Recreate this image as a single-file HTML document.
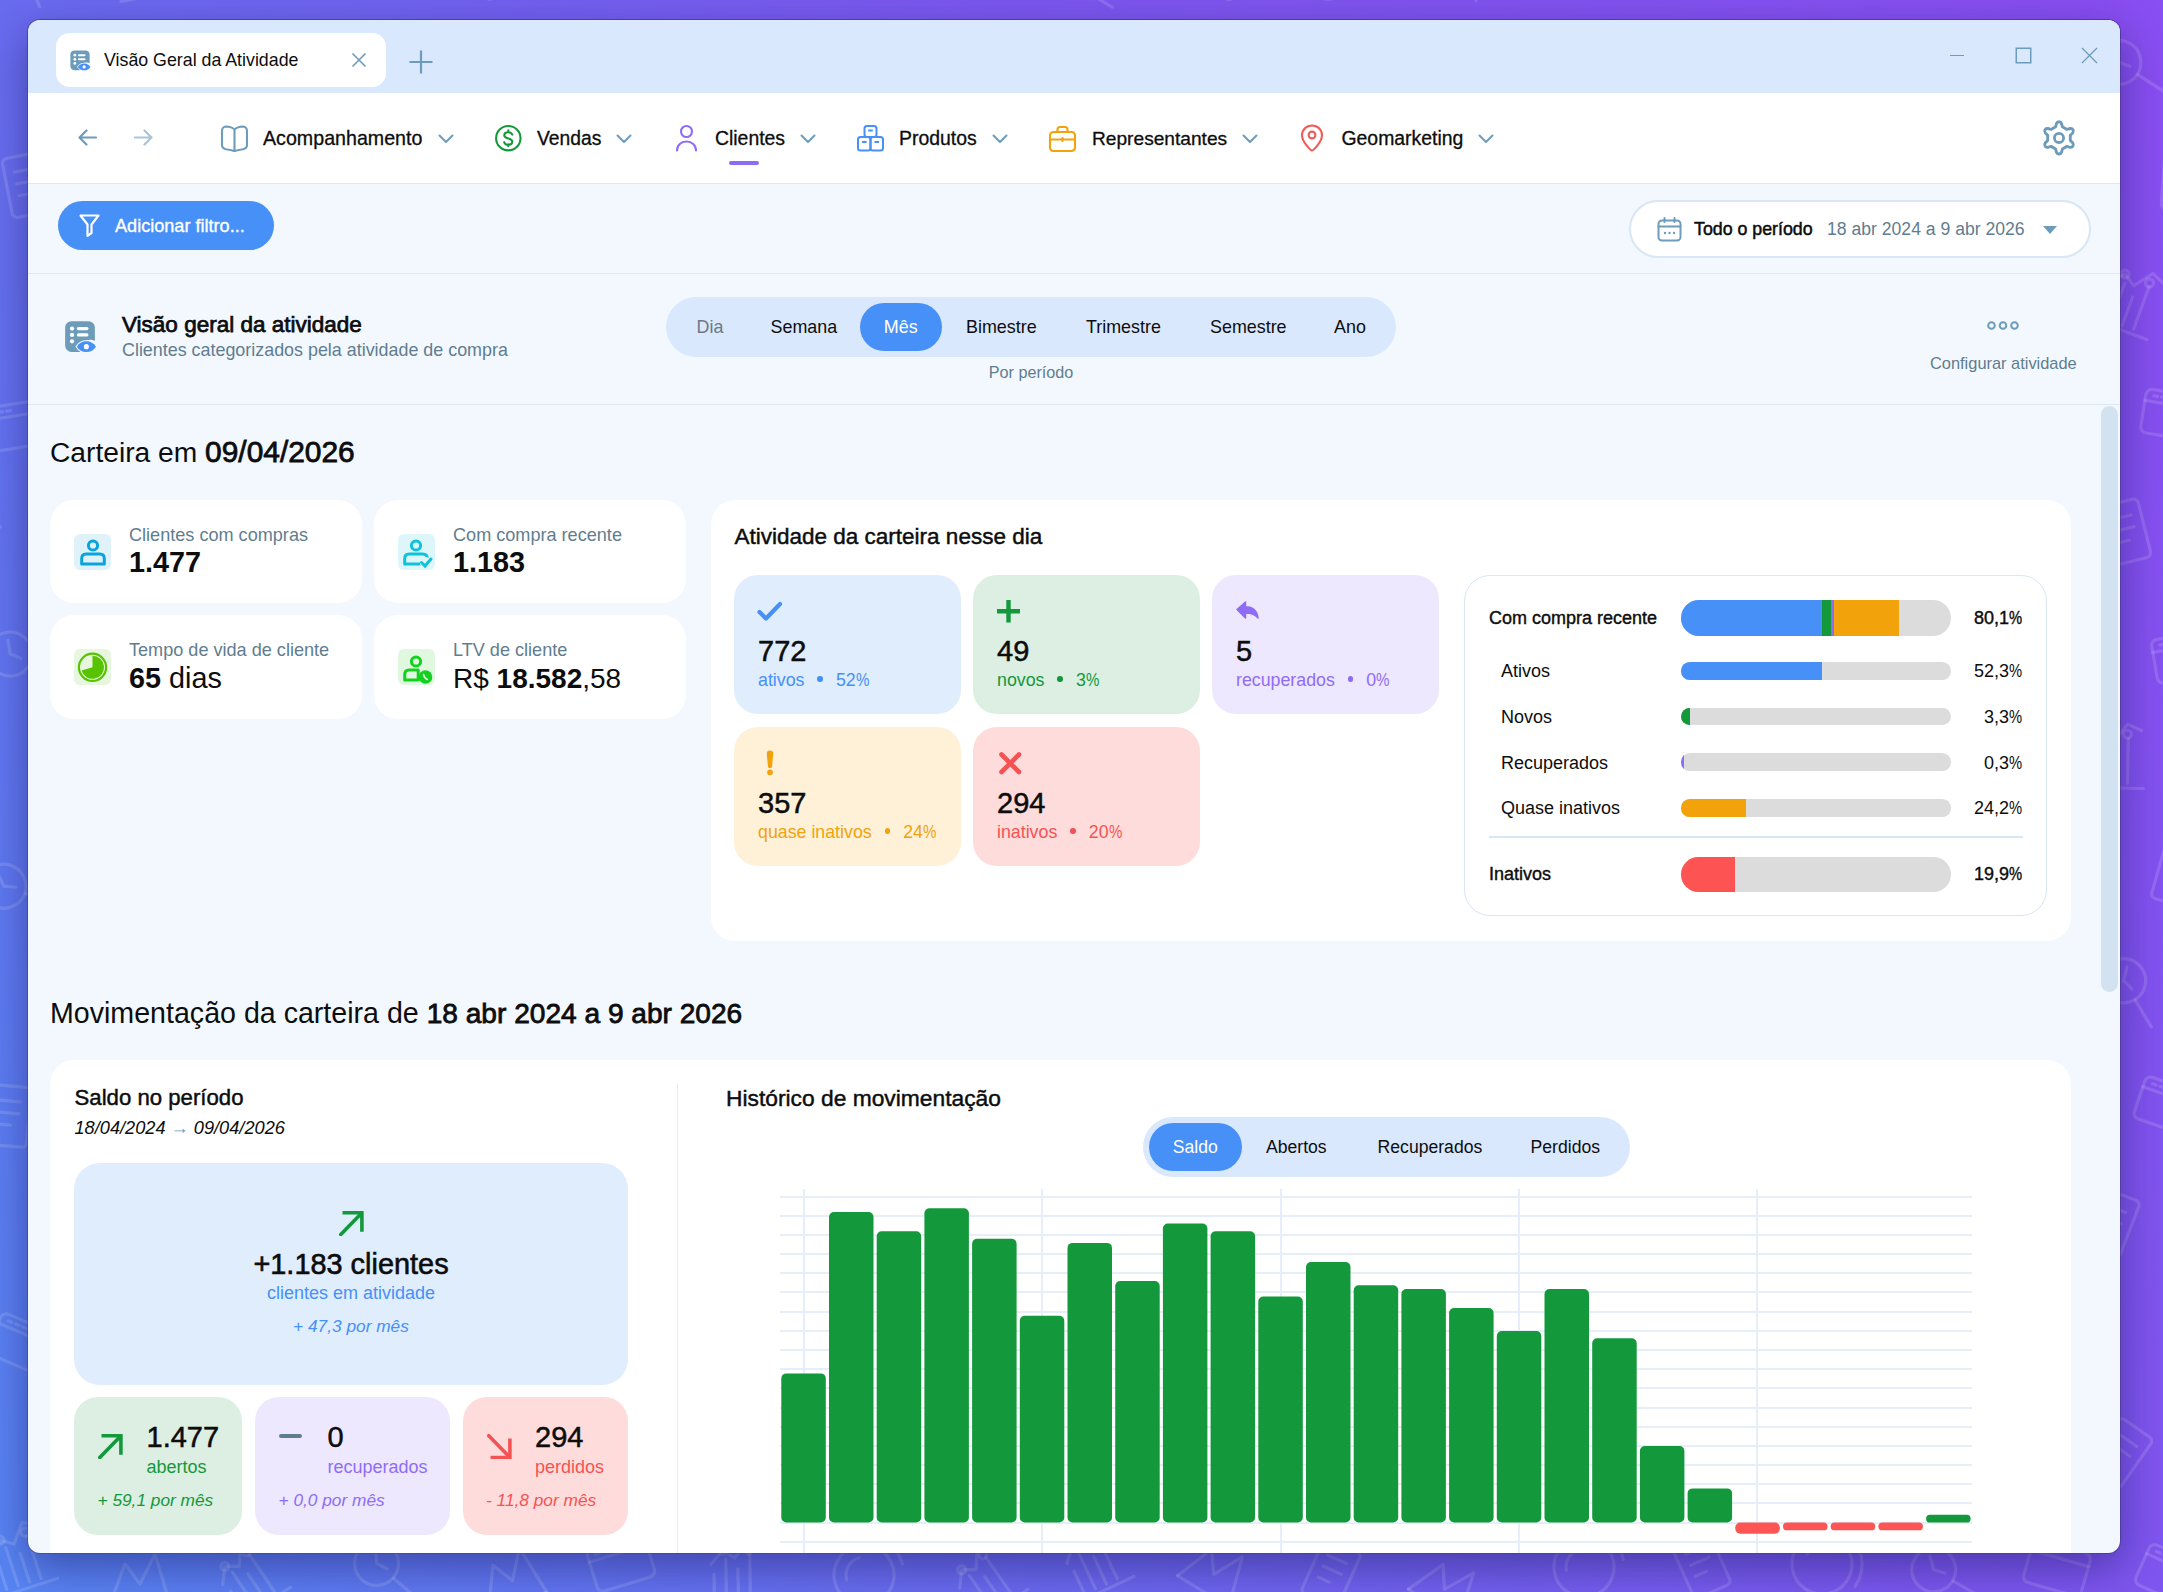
<!DOCTYPE html><html><head><meta charset="utf-8"><style>
html,body{margin:0;padding:0;width:2163px;height:1592px;overflow:hidden}
body{font-family:"Liberation Sans",sans-serif;position:relative;background:linear-gradient(60deg,#5886f5 0%,#6a6cf0 30%,#7d58f0 62%,#8a4ef2 100%)}
.t{position:absolute;line-height:1;white-space:pre}
.r{position:absolute}
</style></head><body>
<svg class="r" style="left:0;top:0" width="2163" height="1592" stroke="rgba(255,255,255,0.14)" stroke-width="3.2" fill="none" stroke-linecap="round" stroke-linejoin="round"><g transform="translate(22 -35) rotate(22)"><circle cx="-6" cy="-6" r="22"/><path d="M10 10l22 22M-6 -20v14l10 6"/></g><g transform="translate(144 -34) rotate(-12)"><path d="M-30 30h60M-22 25v-25M-10 25v-40M2 25v-30M14 25v-45M-25 -10l12-14 12 8 14-18 14 6"/><circle cx="-13" cy="-24" r="4"/><circle cx="13" cy="-24" r="4"/></g><g transform="translate(264 -37) rotate(-12)"><rect x="-20" y="-30" width="40" height="60" rx="5"/><path d="M-10 -15h20M-10 -3h20M-10 9h12"/></g><g transform="translate(371 -38) rotate(-17)"><rect x="-30" y="-22" width="60" height="44" rx="6"/><path d="M-30 -10h60M-22 -16h4M-14 -16h4M-6 -16h4"/></g><g transform="translate(490 -35) rotate(-30)"><rect x="-20" y="-30" width="40" height="60" rx="5"/><path d="M-10 -15h20M-10 -3h20M-10 9h12"/></g><g transform="translate(627 -40) rotate(-15)"><circle cx="-6" cy="-6" r="22"/><path d="M10 10l22 22M-6 -20v14l10 6"/></g><g transform="translate(747 -52) rotate(-27)"><path d="M-30 30l15-40 15 20 15-30 15 50"/><path d="M-30 30h60"/></g><g transform="translate(849 -51) rotate(-5)"><path d="M-30 30h60M-22 25v-25M-10 25v-40M2 25v-30M14 25v-45M-25 -10l12-14 12 8 14-18 14 6"/><circle cx="-13" cy="-24" r="4"/><circle cx="13" cy="-24" r="4"/></g><g transform="translate(987 -52) rotate(6)"><circle cx="-6" cy="-6" r="22"/><path d="M10 10l22 22M-6 -20v14l10 6"/></g><g transform="translate(1102 -34) rotate(31)"><path d="M-30 30h60M-22 25v-25M-10 25v-40M2 25v-30M14 25v-45M-25 -10l12-14 12 8 14-18 14 6"/><circle cx="-13" cy="-24" r="4"/><circle cx="13" cy="-24" r="4"/></g><g transform="translate(1215 -32) rotate(28)"><rect x="-30" y="-22" width="60" height="44" rx="6"/><path d="M-30 -10h60M-22 -16h4M-14 -16h4M-6 -16h4"/></g><g transform="translate(1328 -31) rotate(23)"><circle cx="0" cy="0" r="30"/><path d="M-18 0a18 18 0 0 1 18-18M0 -40a40 40 0 0 1 40 40"/></g><g transform="translate(1468 -44) rotate(35)"><circle cx="-6" cy="-6" r="22"/><path d="M10 10l22 22M-6 -20v14l10 6"/></g><g transform="translate(1570 -30) rotate(5)"><rect x="-30" y="-22" width="60" height="44" rx="6"/><path d="M-30 -10h60M-22 -16h4M-14 -16h4M-6 -16h4"/></g><g transform="translate(1712 -45) rotate(1)"><path d="M-30 30l15-40 15 20 15-30 15 50"/><path d="M-30 30h60"/></g><g transform="translate(1808 -50) rotate(-22)"><path d="M-30 30l15-40 15 20 15-30 15 50"/><path d="M-30 30h60"/></g><g transform="translate(1940 -49) rotate(14)"><rect x="-30" y="-22" width="60" height="44" rx="6"/><path d="M-30 -10h60M-22 -16h4M-14 -16h4M-6 -16h4"/></g><g transform="translate(2050 -52) rotate(-35)"><rect x="-20" y="-30" width="40" height="60" rx="5"/><path d="M-10 -15h20M-10 -3h20M-10 9h12"/></g><g transform="translate(2174 -46) rotate(25)"><circle cx="0" cy="0" r="30"/><path d="M-18 0a18 18 0 0 1 18-18M0 -40a40 40 0 0 1 40 40"/></g><g transform="translate(2300 -30) rotate(18)"><circle cx="-6" cy="-6" r="22"/><path d="M10 10l22 22M-6 -20v14l10 6"/></g><g transform="translate(-50 81) rotate(-10)"><rect x="-20" y="-30" width="40" height="60" rx="5"/><path d="M-10 -15h20M-10 -3h20M-10 9h12"/></g><g transform="translate(92 84) rotate(8)"><rect x="-30" y="-22" width="60" height="44" rx="6"/><path d="M-30 -10h60M-22 -16h4M-14 -16h4M-6 -16h4"/></g><g transform="translate(190 72) rotate(-34)"><rect x="-30" y="-22" width="60" height="44" rx="6"/><path d="M-30 -10h60M-22 -16h4M-14 -16h4M-6 -16h4"/></g><g transform="translate(321 87) rotate(-18)"><circle cx="0" cy="0" r="30"/><path d="M-18 0a18 18 0 0 1 18-18M0 -40a40 40 0 0 1 40 40"/></g><g transform="translate(435 85) rotate(-34)"><circle cx="0" cy="0" r="30"/><path d="M-18 0a18 18 0 0 1 18-18M0 -40a40 40 0 0 1 40 40"/></g><g transform="translate(549 77) rotate(-13)"><circle cx="-6" cy="-6" r="22"/><path d="M10 10l22 22M-6 -20v14l10 6"/></g><g transform="translate(689 80) rotate(22)"><path d="M-30 30h60M-22 25v-25M-10 25v-40M2 25v-30M14 25v-45M-25 -10l12-14 12 8 14-18 14 6"/><circle cx="-13" cy="-24" r="4"/><circle cx="13" cy="-24" r="4"/></g><g transform="translate(804 69) rotate(-19)"><rect x="-20" y="-30" width="40" height="60" rx="5"/><path d="M-10 -15h20M-10 -3h20M-10 9h12"/></g><g transform="translate(921 83) rotate(-21)"><circle cx="-6" cy="-6" r="22"/><path d="M10 10l22 22M-6 -20v14l10 6"/></g><g transform="translate(1040 76) rotate(-35)"><path d="M-30 30h60M-22 25v-25M-10 25v-40M2 25v-30M14 25v-45M-25 -10l12-14 12 8 14-18 14 6"/><circle cx="-13" cy="-24" r="4"/><circle cx="13" cy="-24" r="4"/></g><g transform="translate(1156 81) rotate(-33)"><rect x="-30" y="-22" width="60" height="44" rx="6"/><path d="M-30 -10h60M-22 -16h4M-14 -16h4M-6 -16h4"/></g><g transform="translate(1274 68) rotate(-23)"><circle cx="-6" cy="-6" r="22"/><path d="M10 10l22 22M-6 -20v14l10 6"/></g><g transform="translate(1389 67) rotate(21)"><path d="M-30 30h60M-22 25v-25M-10 25v-40M2 25v-30M14 25v-45M-25 -10l12-14 12 8 14-18 14 6"/><circle cx="-13" cy="-24" r="4"/><circle cx="13" cy="-24" r="4"/></g><g transform="translate(1516 63) rotate(7)"><path d="M-30 30l15-40 15 20 15-30 15 50"/><path d="M-30 30h60"/></g><g transform="translate(1637 75) rotate(-26)"><circle cx="0" cy="0" r="30"/><path d="M-18 0a18 18 0 0 1 18-18M0 -40a40 40 0 0 1 40 40"/></g><g transform="translate(1750 69) rotate(-4)"><path d="M-30 30l15-40 15 20 15-30 15 50"/><path d="M-30 30h60"/></g><g transform="translate(1868 82) rotate(12)"><rect x="-30" y="-22" width="60" height="44" rx="6"/><path d="M-30 -10h60M-22 -16h4M-14 -16h4M-6 -16h4"/></g><g transform="translate(2007 77) rotate(26)"><path d="M-30 30h60M-22 25v-25M-10 25v-40M2 25v-30M14 25v-45M-25 -10l12-14 12 8 14-18 14 6"/><circle cx="-13" cy="-24" r="4"/><circle cx="13" cy="-24" r="4"/></g><g transform="translate(2126 67) rotate(-12)"><circle cx="-6" cy="-6" r="22"/><path d="M10 10l22 22M-6 -20v14l10 6"/></g><g transform="translate(2248 67) rotate(-6)"><rect x="-30" y="-22" width="60" height="44" rx="6"/><path d="M-30 -10h60M-22 -16h4M-14 -16h4M-6 -16h4"/></g><g transform="translate(27 185) rotate(-11)"><rect x="-20" y="-30" width="40" height="60" rx="5"/><path d="M-10 -15h20M-10 -3h20M-10 9h12"/></g><g transform="translate(133 201) rotate(35)"><rect x="-20" y="-30" width="40" height="60" rx="5"/><path d="M-10 -15h20M-10 -3h20M-10 9h12"/></g><g transform="translate(254 199) rotate(26)"><circle cx="-6" cy="-6" r="22"/><path d="M10 10l22 22M-6 -20v14l10 6"/></g><g transform="translate(387 180) rotate(-29)"><circle cx="-6" cy="-6" r="22"/><path d="M10 10l22 22M-6 -20v14l10 6"/></g><g transform="translate(491 181) rotate(30)"><circle cx="0" cy="0" r="30"/><path d="M-18 0a18 18 0 0 1 18-18M0 -40a40 40 0 0 1 40 40"/></g><g transform="translate(616 185) rotate(15)"><rect x="-20" y="-30" width="40" height="60" rx="5"/><path d="M-10 -15h20M-10 -3h20M-10 9h12"/></g><g transform="translate(736 191) rotate(27)"><path d="M-30 30l15-40 15 20 15-30 15 50"/><path d="M-30 30h60"/></g><g transform="translate(857 194) rotate(-27)"><path d="M-30 30h60M-22 25v-25M-10 25v-40M2 25v-30M14 25v-45M-25 -10l12-14 12 8 14-18 14 6"/><circle cx="-13" cy="-24" r="4"/><circle cx="13" cy="-24" r="4"/></g><g transform="translate(972 185) rotate(-26)"><circle cx="-6" cy="-6" r="22"/><path d="M10 10l22 22M-6 -20v14l10 6"/></g><g transform="translate(1096 184) rotate(-33)"><path d="M-30 30h60M-22 25v-25M-10 25v-40M2 25v-30M14 25v-45M-25 -10l12-14 12 8 14-18 14 6"/><circle cx="-13" cy="-24" r="4"/><circle cx="13" cy="-24" r="4"/></g><g transform="translate(1210 186) rotate(22)"><circle cx="-6" cy="-6" r="22"/><path d="M10 10l22 22M-6 -20v14l10 6"/></g><g transform="translate(1335 179) rotate(-13)"><circle cx="0" cy="0" r="30"/><path d="M-18 0a18 18 0 0 1 18-18M0 -40a40 40 0 0 1 40 40"/></g><g transform="translate(1457 189) rotate(-19)"><path d="M-30 30l15-40 15 20 15-30 15 50"/><path d="M-30 30h60"/></g><g transform="translate(1570 189) rotate(22)"><path d="M-30 30h60M-22 25v-25M-10 25v-40M2 25v-30M14 25v-45M-25 -10l12-14 12 8 14-18 14 6"/><circle cx="-13" cy="-24" r="4"/><circle cx="13" cy="-24" r="4"/></g><g transform="translate(1698 199) rotate(31)"><rect x="-20" y="-30" width="40" height="60" rx="5"/><path d="M-10 -15h20M-10 -3h20M-10 9h12"/></g><g transform="translate(1826 182) rotate(-31)"><path d="M-30 30l15-40 15 20 15-30 15 50"/><path d="M-30 30h60"/></g><g transform="translate(1928 193) rotate(4)"><rect x="-30" y="-22" width="60" height="44" rx="6"/><path d="M-30 -10h60M-22 -16h4M-14 -16h4M-6 -16h4"/></g><g transform="translate(2049 178) rotate(-26)"><path d="M-30 30l15-40 15 20 15-30 15 50"/><path d="M-30 30h60"/></g><g transform="translate(2183 180) rotate(4)"><rect x="-20" y="-30" width="40" height="60" rx="5"/><path d="M-10 -15h20M-10 -3h20M-10 9h12"/></g><g transform="translate(2298 182) rotate(-26)"><circle cx="0" cy="0" r="30"/><path d="M-18 0a18 18 0 0 1 18-18M0 -40a40 40 0 0 1 40 40"/></g><g transform="translate(-38 310) rotate(-30)"><rect x="-30" y="-22" width="60" height="44" rx="6"/><path d="M-30 -10h60M-22 -16h4M-14 -16h4M-6 -16h4"/></g><g transform="translate(91 316) rotate(-19)"><rect x="-20" y="-30" width="40" height="60" rx="5"/><path d="M-10 -15h20M-10 -3h20M-10 9h12"/></g><g transform="translate(198 304) rotate(25)"><circle cx="0" cy="0" r="30"/><path d="M-18 0a18 18 0 0 1 18-18M0 -40a40 40 0 0 1 40 40"/></g><g transform="translate(310 306) rotate(28)"><circle cx="0" cy="0" r="30"/><path d="M-18 0a18 18 0 0 1 18-18M0 -40a40 40 0 0 1 40 40"/></g><g transform="translate(446 293) rotate(13)"><path d="M-30 30l15-40 15 20 15-30 15 50"/><path d="M-30 30h60"/></g><g transform="translate(560 311) rotate(-26)"><circle cx="0" cy="0" r="30"/><path d="M-18 0a18 18 0 0 1 18-18M0 -40a40 40 0 0 1 40 40"/></g><g transform="translate(670 295) rotate(-21)"><rect x="-20" y="-30" width="40" height="60" rx="5"/><path d="M-10 -15h20M-10 -3h20M-10 9h12"/></g><g transform="translate(796 306) rotate(7)"><rect x="-20" y="-30" width="40" height="60" rx="5"/><path d="M-10 -15h20M-10 -3h20M-10 9h12"/></g><g transform="translate(920 316) rotate(23)"><rect x="-20" y="-30" width="40" height="60" rx="5"/><path d="M-10 -15h20M-10 -3h20M-10 9h12"/></g><g transform="translate(1042 307) rotate(-25)"><path d="M-30 30l15-40 15 20 15-30 15 50"/><path d="M-30 30h60"/></g><g transform="translate(1164 317) rotate(-32)"><path d="M-30 30l15-40 15 20 15-30 15 50"/><path d="M-30 30h60"/></g><g transform="translate(1277 312) rotate(26)"><circle cx="0" cy="0" r="30"/><path d="M-18 0a18 18 0 0 1 18-18M0 -40a40 40 0 0 1 40 40"/></g><g transform="translate(1388 300) rotate(-21)"><rect x="-20" y="-30" width="40" height="60" rx="5"/><path d="M-10 -15h20M-10 -3h20M-10 9h12"/></g><g transform="translate(1523 317) rotate(27)"><path d="M-30 30l15-40 15 20 15-30 15 50"/><path d="M-30 30h60"/></g><g transform="translate(1636 293) rotate(3)"><rect x="-30" y="-22" width="60" height="44" rx="6"/><path d="M-30 -10h60M-22 -16h4M-14 -16h4M-6 -16h4"/></g><g transform="translate(1752 314) rotate(-10)"><path d="M-30 30l15-40 15 20 15-30 15 50"/><path d="M-30 30h60"/></g><g transform="translate(1884 298) rotate(21)"><rect x="-30" y="-22" width="60" height="44" rx="6"/><path d="M-30 -10h60M-22 -16h4M-14 -16h4M-6 -16h4"/></g><g transform="translate(2003 300) rotate(16)"><rect x="-30" y="-22" width="60" height="44" rx="6"/><path d="M-30 -10h60M-22 -16h4M-14 -16h4M-6 -16h4"/></g><g transform="translate(2129 301) rotate(20)"><path d="M-30 30h60M-22 25v-25M-10 25v-40M2 25v-30M14 25v-45M-25 -10l12-14 12 8 14-18 14 6"/><circle cx="-13" cy="-24" r="4"/><circle cx="13" cy="-24" r="4"/></g><g transform="translate(2252 299) rotate(14)"><path d="M-30 30h60M-22 25v-25M-10 25v-40M2 25v-30M14 25v-45M-25 -10l12-14 12 8 14-18 14 6"/><circle cx="-13" cy="-24" r="4"/><circle cx="13" cy="-24" r="4"/></g><g transform="translate(15 426) rotate(-9)"><rect x="-30" y="-22" width="60" height="44" rx="6"/><path d="M-30 -10h60M-22 -16h4M-14 -16h4M-6 -16h4"/></g><g transform="translate(132 412) rotate(9)"><circle cx="-6" cy="-6" r="22"/><path d="M10 10l22 22M-6 -20v14l10 6"/></g><g transform="translate(249 430) rotate(0)"><circle cx="0" cy="0" r="30"/><path d="M-18 0a18 18 0 0 1 18-18M0 -40a40 40 0 0 1 40 40"/></g><g transform="translate(373 411) rotate(25)"><circle cx="-6" cy="-6" r="22"/><path d="M10 10l22 22M-6 -20v14l10 6"/></g><g transform="translate(496 414) rotate(13)"><circle cx="-6" cy="-6" r="22"/><path d="M10 10l22 22M-6 -20v14l10 6"/></g><g transform="translate(628 424) rotate(5)"><circle cx="-6" cy="-6" r="22"/><path d="M10 10l22 22M-6 -20v14l10 6"/></g><g transform="translate(750 427) rotate(6)"><circle cx="-6" cy="-6" r="22"/><path d="M10 10l22 22M-6 -20v14l10 6"/></g><g transform="translate(850 409) rotate(-30)"><rect x="-30" y="-22" width="60" height="44" rx="6"/><path d="M-30 -10h60M-22 -16h4M-14 -16h4M-6 -16h4"/></g><g transform="translate(989 430) rotate(10)"><rect x="-30" y="-22" width="60" height="44" rx="6"/><path d="M-30 -10h60M-22 -16h4M-14 -16h4M-6 -16h4"/></g><g transform="translate(1097 428) rotate(-33)"><path d="M-30 30l15-40 15 20 15-30 15 50"/><path d="M-30 30h60"/></g><g transform="translate(1228 412) rotate(23)"><circle cx="-6" cy="-6" r="22"/><path d="M10 10l22 22M-6 -20v14l10 6"/></g><g transform="translate(1334 408) rotate(-5)"><rect x="-30" y="-22" width="60" height="44" rx="6"/><path d="M-30 -10h60M-22 -16h4M-14 -16h4M-6 -16h4"/></g><g transform="translate(1472 412) rotate(-21)"><circle cx="0" cy="0" r="30"/><path d="M-18 0a18 18 0 0 1 18-18M0 -40a40 40 0 0 1 40 40"/></g><g transform="translate(1582 411) rotate(33)"><rect x="-20" y="-30" width="40" height="60" rx="5"/><path d="M-10 -15h20M-10 -3h20M-10 9h12"/></g><g transform="translate(1708 428) rotate(-26)"><rect x="-30" y="-22" width="60" height="44" rx="6"/><path d="M-30 -10h60M-22 -16h4M-14 -16h4M-6 -16h4"/></g><g transform="translate(1829 414) rotate(25)"><path d="M-30 30h60M-22 25v-25M-10 25v-40M2 25v-30M14 25v-45M-25 -10l12-14 12 8 14-18 14 6"/><circle cx="-13" cy="-24" r="4"/><circle cx="13" cy="-24" r="4"/></g><g transform="translate(1936 413) rotate(-34)"><rect x="-20" y="-30" width="40" height="60" rx="5"/><path d="M-10 -15h20M-10 -3h20M-10 9h12"/></g><g transform="translate(2072 423) rotate(-31)"><path d="M-30 30l15-40 15 20 15-30 15 50"/><path d="M-30 30h60"/></g><g transform="translate(2173 415) rotate(9)"><rect x="-30" y="-22" width="60" height="44" rx="6"/><path d="M-30 -10h60M-22 -16h4M-14 -16h4M-6 -16h4"/></g><g transform="translate(2305 430) rotate(29)"><path d="M-30 30l15-40 15 20 15-30 15 50"/><path d="M-30 30h60"/></g><g transform="translate(-33 547) rotate(15)"><path d="M-30 30h60M-22 25v-25M-10 25v-40M2 25v-30M14 25v-45M-25 -10l12-14 12 8 14-18 14 6"/><circle cx="-13" cy="-24" r="4"/><circle cx="13" cy="-24" r="4"/></g><g transform="translate(90 530) rotate(17)"><circle cx="0" cy="0" r="30"/><path d="M-18 0a18 18 0 0 1 18-18M0 -40a40 40 0 0 1 40 40"/></g><g transform="translate(211 535) rotate(22)"><path d="M-30 30h60M-22 25v-25M-10 25v-40M2 25v-30M14 25v-45M-25 -10l12-14 12 8 14-18 14 6"/><circle cx="-13" cy="-24" r="4"/><circle cx="13" cy="-24" r="4"/></g><g transform="translate(322 529) rotate(-35)"><rect x="-20" y="-30" width="40" height="60" rx="5"/><path d="M-10 -15h20M-10 -3h20M-10 9h12"/></g><g transform="translate(440 540) rotate(29)"><path d="M-30 30l15-40 15 20 15-30 15 50"/><path d="M-30 30h60"/></g><g transform="translate(558 537) rotate(-9)"><rect x="-30" y="-22" width="60" height="44" rx="6"/><path d="M-30 -10h60M-22 -16h4M-14 -16h4M-6 -16h4"/></g><g transform="translate(671 546) rotate(-20)"><rect x="-20" y="-30" width="40" height="60" rx="5"/><path d="M-10 -15h20M-10 -3h20M-10 9h12"/></g><g transform="translate(794 530) rotate(-24)"><circle cx="-6" cy="-6" r="22"/><path d="M10 10l22 22M-6 -20v14l10 6"/></g><g transform="translate(917 540) rotate(-2)"><rect x="-30" y="-22" width="60" height="44" rx="6"/><path d="M-30 -10h60M-22 -16h4M-14 -16h4M-6 -16h4"/></g><g transform="translate(1050 523) rotate(29)"><rect x="-30" y="-22" width="60" height="44" rx="6"/><path d="M-30 -10h60M-22 -16h4M-14 -16h4M-6 -16h4"/></g><g transform="translate(1150 524) rotate(8)"><circle cx="-6" cy="-6" r="22"/><path d="M10 10l22 22M-6 -20v14l10 6"/></g><g transform="translate(1285 536) rotate(27)"><rect x="-30" y="-22" width="60" height="44" rx="6"/><path d="M-30 -10h60M-22 -16h4M-14 -16h4M-6 -16h4"/></g><g transform="translate(1388 529) rotate(19)"><circle cx="0" cy="0" r="30"/><path d="M-18 0a18 18 0 0 1 18-18M0 -40a40 40 0 0 1 40 40"/></g><g transform="translate(1509 528) rotate(7)"><path d="M-30 30l15-40 15 20 15-30 15 50"/><path d="M-30 30h60"/></g><g transform="translate(1649 527) rotate(-16)"><circle cx="-6" cy="-6" r="22"/><path d="M10 10l22 22M-6 -20v14l10 6"/></g><g transform="translate(1764 546) rotate(21)"><path d="M-30 30l15-40 15 20 15-30 15 50"/><path d="M-30 30h60"/></g><g transform="translate(1883 541) rotate(-24)"><rect x="-20" y="-30" width="40" height="60" rx="5"/><path d="M-10 -15h20M-10 -3h20M-10 9h12"/></g><g transform="translate(2012 530) rotate(32)"><circle cx="-6" cy="-6" r="22"/><path d="M10 10l22 22M-6 -20v14l10 6"/></g><g transform="translate(2125 532) rotate(-14)"><rect x="-20" y="-30" width="40" height="60" rx="5"/><path d="M-10 -15h20M-10 -3h20M-10 9h12"/></g><g transform="translate(2244 539) rotate(-3)"><path d="M-30 30l15-40 15 20 15-30 15 50"/><path d="M-30 30h60"/></g><g transform="translate(17 659) rotate(-9)"><circle cx="-6" cy="-6" r="22"/><path d="M10 10l22 22M-6 -20v14l10 6"/></g><g transform="translate(137 642) rotate(32)"><path d="M-30 30l15-40 15 20 15-30 15 50"/><path d="M-30 30h60"/></g><g transform="translate(256 656) rotate(-10)"><circle cx="-6" cy="-6" r="22"/><path d="M10 10l22 22M-6 -20v14l10 6"/></g><g transform="translate(381 655) rotate(29)"><circle cx="0" cy="0" r="30"/><path d="M-18 0a18 18 0 0 1 18-18M0 -40a40 40 0 0 1 40 40"/></g><g transform="translate(488 657) rotate(-32)"><circle cx="-6" cy="-6" r="22"/><path d="M10 10l22 22M-6 -20v14l10 6"/></g><g transform="translate(625 639) rotate(16)"><path d="M-30 30l15-40 15 20 15-30 15 50"/><path d="M-30 30h60"/></g><g transform="translate(745 656) rotate(27)"><circle cx="0" cy="0" r="30"/><path d="M-18 0a18 18 0 0 1 18-18M0 -40a40 40 0 0 1 40 40"/></g><g transform="translate(850 660) rotate(-27)"><path d="M-30 30h60M-22 25v-25M-10 25v-40M2 25v-30M14 25v-45M-25 -10l12-14 12 8 14-18 14 6"/><circle cx="-13" cy="-24" r="4"/><circle cx="13" cy="-24" r="4"/></g><g transform="translate(985 652) rotate(16)"><circle cx="-6" cy="-6" r="22"/><path d="M10 10l22 22M-6 -20v14l10 6"/></g><g transform="translate(1096 645) rotate(28)"><circle cx="-6" cy="-6" r="22"/><path d="M10 10l22 22M-6 -20v14l10 6"/></g><g transform="translate(1212 648) rotate(25)"><circle cx="-6" cy="-6" r="22"/><path d="M10 10l22 22M-6 -20v14l10 6"/></g><g transform="translate(1344 648) rotate(-11)"><circle cx="0" cy="0" r="30"/><path d="M-18 0a18 18 0 0 1 18-18M0 -40a40 40 0 0 1 40 40"/></g><g transform="translate(1461 657) rotate(-2)"><circle cx="0" cy="0" r="30"/><path d="M-18 0a18 18 0 0 1 18-18M0 -40a40 40 0 0 1 40 40"/></g><g transform="translate(1572 660) rotate(-31)"><circle cx="0" cy="0" r="30"/><path d="M-18 0a18 18 0 0 1 18-18M0 -40a40 40 0 0 1 40 40"/></g><g transform="translate(1694 642) rotate(-34)"><path d="M-30 30h60M-22 25v-25M-10 25v-40M2 25v-30M14 25v-45M-25 -10l12-14 12 8 14-18 14 6"/><circle cx="-13" cy="-24" r="4"/><circle cx="13" cy="-24" r="4"/></g><g transform="translate(1829 647) rotate(10)"><rect x="-30" y="-22" width="60" height="44" rx="6"/><path d="M-30 -10h60M-22 -16h4M-14 -16h4M-6 -16h4"/></g><g transform="translate(1935 657) rotate(-22)"><circle cx="-6" cy="-6" r="22"/><path d="M10 10l22 22M-6 -20v14l10 6"/></g><g transform="translate(2063 661) rotate(-20)"><path d="M-30 30l15-40 15 20 15-30 15 50"/><path d="M-30 30h60"/></g><g transform="translate(2184 657) rotate(-10)"><rect x="-30" y="-22" width="60" height="44" rx="6"/><path d="M-30 -10h60M-22 -16h4M-14 -16h4M-6 -16h4"/></g><g transform="translate(2310 654) rotate(-33)"><circle cx="-6" cy="-6" r="22"/><path d="M10 10l22 22M-6 -20v14l10 6"/></g><g transform="translate(-40 773) rotate(32)"><circle cx="-6" cy="-6" r="22"/><path d="M10 10l22 22M-6 -20v14l10 6"/></g><g transform="translate(87 758) rotate(-9)"><path d="M-30 30l15-40 15 20 15-30 15 50"/><path d="M-30 30h60"/></g><g transform="translate(208 770) rotate(-8)"><rect x="-20" y="-30" width="40" height="60" rx="5"/><path d="M-10 -15h20M-10 -3h20M-10 9h12"/></g><g transform="translate(324 759) rotate(-18)"><path d="M-30 30l15-40 15 20 15-30 15 50"/><path d="M-30 30h60"/></g><g transform="translate(435 776) rotate(9)"><rect x="-20" y="-30" width="40" height="60" rx="5"/><path d="M-10 -15h20M-10 -3h20M-10 9h12"/></g><g transform="translate(553 763) rotate(5)"><path d="M-30 30l15-40 15 20 15-30 15 50"/><path d="M-30 30h60"/></g><g transform="translate(674 759) rotate(-23)"><path d="M-30 30h60M-22 25v-25M-10 25v-40M2 25v-30M14 25v-45M-25 -10l12-14 12 8 14-18 14 6"/><circle cx="-13" cy="-24" r="4"/><circle cx="13" cy="-24" r="4"/></g><g transform="translate(792 760) rotate(-24)"><path d="M-30 30h60M-22 25v-25M-10 25v-40M2 25v-30M14 25v-45M-25 -10l12-14 12 8 14-18 14 6"/><circle cx="-13" cy="-24" r="4"/><circle cx="13" cy="-24" r="4"/></g><g transform="translate(916 765) rotate(20)"><circle cx="0" cy="0" r="30"/><path d="M-18 0a18 18 0 0 1 18-18M0 -40a40 40 0 0 1 40 40"/></g><g transform="translate(1041 770) rotate(-19)"><rect x="-20" y="-30" width="40" height="60" rx="5"/><path d="M-10 -15h20M-10 -3h20M-10 9h12"/></g><g transform="translate(1154 765) rotate(-33)"><rect x="-20" y="-30" width="40" height="60" rx="5"/><path d="M-10 -15h20M-10 -3h20M-10 9h12"/></g><g transform="translate(1271 759) rotate(10)"><path d="M-30 30l15-40 15 20 15-30 15 50"/><path d="M-30 30h60"/></g><g transform="translate(1399 756) rotate(29)"><rect x="-20" y="-30" width="40" height="60" rx="5"/><path d="M-10 -15h20M-10 -3h20M-10 9h12"/></g><g transform="translate(1528 777) rotate(29)"><rect x="-30" y="-22" width="60" height="44" rx="6"/><path d="M-30 -10h60M-22 -16h4M-14 -16h4M-6 -16h4"/></g><g transform="translate(1649 759) rotate(26)"><circle cx="0" cy="0" r="30"/><path d="M-18 0a18 18 0 0 1 18-18M0 -40a40 40 0 0 1 40 40"/></g><g transform="translate(1751 753) rotate(35)"><circle cx="0" cy="0" r="30"/><path d="M-18 0a18 18 0 0 1 18-18M0 -40a40 40 0 0 1 40 40"/></g><g transform="translate(1887 769) rotate(26)"><path d="M-30 30l15-40 15 20 15-30 15 50"/><path d="M-30 30h60"/></g><g transform="translate(1992 759) rotate(-21)"><path d="M-30 30h60M-22 25v-25M-10 25v-40M2 25v-30M14 25v-45M-25 -10l12-14 12 8 14-18 14 6"/><circle cx="-13" cy="-24" r="4"/><circle cx="13" cy="-24" r="4"/></g><g transform="translate(2114 758) rotate(1)"><path d="M-30 30h60M-22 25v-25M-10 25v-40M2 25v-30M14 25v-45M-25 -10l12-14 12 8 14-18 14 6"/><circle cx="-13" cy="-24" r="4"/><circle cx="13" cy="-24" r="4"/></g><g transform="translate(2249 756) rotate(-28)"><path d="M-30 30l15-40 15 20 15-30 15 50"/><path d="M-30 30h60"/></g><g transform="translate(12 889) rotate(-26)"><circle cx="-6" cy="-6" r="22"/><path d="M10 10l22 22M-6 -20v14l10 6"/></g><g transform="translate(152 871) rotate(15)"><rect x="-30" y="-22" width="60" height="44" rx="6"/><path d="M-30 -10h60M-22 -16h4M-14 -16h4M-6 -16h4"/></g><g transform="translate(262 881) rotate(10)"><path d="M-30 30l15-40 15 20 15-30 15 50"/><path d="M-30 30h60"/></g><g transform="translate(381 874) rotate(12)"><path d="M-30 30l15-40 15 20 15-30 15 50"/><path d="M-30 30h60"/></g><g transform="translate(488 888) rotate(-30)"><rect x="-20" y="-30" width="40" height="60" rx="5"/><path d="M-10 -15h20M-10 -3h20M-10 9h12"/></g><g transform="translate(614 873) rotate(23)"><circle cx="-6" cy="-6" r="22"/><path d="M10 10l22 22M-6 -20v14l10 6"/></g><g transform="translate(739 891) rotate(16)"><rect x="-30" y="-22" width="60" height="44" rx="6"/><path d="M-30 -10h60M-22 -16h4M-14 -16h4M-6 -16h4"/></g><g transform="translate(854 887) rotate(-23)"><path d="M-30 30h60M-22 25v-25M-10 25v-40M2 25v-30M14 25v-45M-25 -10l12-14 12 8 14-18 14 6"/><circle cx="-13" cy="-24" r="4"/><circle cx="13" cy="-24" r="4"/></g><g transform="translate(984 868) rotate(-25)"><rect x="-30" y="-22" width="60" height="44" rx="6"/><path d="M-30 -10h60M-22 -16h4M-14 -16h4M-6 -16h4"/></g><g transform="translate(1110 888) rotate(-11)"><circle cx="-6" cy="-6" r="22"/><path d="M10 10l22 22M-6 -20v14l10 6"/></g><g transform="translate(1224 886) rotate(-2)"><rect x="-30" y="-22" width="60" height="44" rx="6"/><path d="M-30 -10h60M-22 -16h4M-14 -16h4M-6 -16h4"/></g><g transform="translate(1336 871) rotate(-15)"><rect x="-20" y="-30" width="40" height="60" rx="5"/><path d="M-10 -15h20M-10 -3h20M-10 9h12"/></g><g transform="translate(1460 872) rotate(33)"><rect x="-30" y="-22" width="60" height="44" rx="6"/><path d="M-30 -10h60M-22 -16h4M-14 -16h4M-6 -16h4"/></g><g transform="translate(1590 879) rotate(-12)"><circle cx="-6" cy="-6" r="22"/><path d="M10 10l22 22M-6 -20v14l10 6"/></g><g transform="translate(1700 874) rotate(-12)"><rect x="-20" y="-30" width="40" height="60" rx="5"/><path d="M-10 -15h20M-10 -3h20M-10 9h12"/></g><g transform="translate(1810 878) rotate(25)"><rect x="-30" y="-22" width="60" height="44" rx="6"/><path d="M-30 -10h60M-22 -16h4M-14 -16h4M-6 -16h4"/></g><g transform="translate(1931 868) rotate(-29)"><rect x="-30" y="-22" width="60" height="44" rx="6"/><path d="M-30 -10h60M-22 -16h4M-14 -16h4M-6 -16h4"/></g><g transform="translate(2055 876) rotate(3)"><rect x="-20" y="-30" width="40" height="60" rx="5"/><path d="M-10 -15h20M-10 -3h20M-10 9h12"/></g><g transform="translate(2178 874) rotate(16)"><rect x="-20" y="-30" width="40" height="60" rx="5"/><path d="M-10 -15h20M-10 -3h20M-10 9h12"/></g><g transform="translate(2306 873) rotate(-26)"><path d="M-30 30l15-40 15 20 15-30 15 50"/><path d="M-30 30h60"/></g><g transform="translate(-40 999) rotate(-8)"><circle cx="-6" cy="-6" r="22"/><path d="M10 10l22 22M-6 -20v14l10 6"/></g><g transform="translate(90 986) rotate(-33)"><circle cx="-6" cy="-6" r="22"/><path d="M10 10l22 22M-6 -20v14l10 6"/></g><g transform="translate(191 1002) rotate(-5)"><circle cx="0" cy="0" r="30"/><path d="M-18 0a18 18 0 0 1 18-18M0 -40a40 40 0 0 1 40 40"/></g><g transform="translate(316 997) rotate(29)"><circle cx="-6" cy="-6" r="22"/><path d="M10 10l22 22M-6 -20v14l10 6"/></g><g transform="translate(429 1007) rotate(13)"><path d="M-30 30h60M-22 25v-25M-10 25v-40M2 25v-30M14 25v-45M-25 -10l12-14 12 8 14-18 14 6"/><circle cx="-13" cy="-24" r="4"/><circle cx="13" cy="-24" r="4"/></g><g transform="translate(548 986) rotate(-3)"><rect x="-30" y="-22" width="60" height="44" rx="6"/><path d="M-30 -10h60M-22 -16h4M-14 -16h4M-6 -16h4"/></g><g transform="translate(676 993) rotate(34)"><path d="M-30 30l15-40 15 20 15-30 15 50"/><path d="M-30 30h60"/></g><g transform="translate(804 996) rotate(-23)"><path d="M-30 30l15-40 15 20 15-30 15 50"/><path d="M-30 30h60"/></g><g transform="translate(928 997) rotate(-26)"><rect x="-20" y="-30" width="40" height="60" rx="5"/><path d="M-10 -15h20M-10 -3h20M-10 9h12"/></g><g transform="translate(1045 1002) rotate(-30)"><rect x="-20" y="-30" width="40" height="60" rx="5"/><path d="M-10 -15h20M-10 -3h20M-10 9h12"/></g><g transform="translate(1160 988) rotate(25)"><circle cx="-6" cy="-6" r="22"/><path d="M10 10l22 22M-6 -20v14l10 6"/></g><g transform="translate(1273 998) rotate(-28)"><path d="M-30 30l15-40 15 20 15-30 15 50"/><path d="M-30 30h60"/></g><g transform="translate(1401 998) rotate(1)"><circle cx="-6" cy="-6" r="22"/><path d="M10 10l22 22M-6 -20v14l10 6"/></g><g transform="translate(1524 995) rotate(4)"><path d="M-30 30l15-40 15 20 15-30 15 50"/><path d="M-30 30h60"/></g><g transform="translate(1639 999) rotate(26)"><rect x="-30" y="-22" width="60" height="44" rx="6"/><path d="M-30 -10h60M-22 -16h4M-14 -16h4M-6 -16h4"/></g><g transform="translate(1768 991) rotate(1)"><path d="M-30 30l15-40 15 20 15-30 15 50"/><path d="M-30 30h60"/></g><g transform="translate(1889 1005) rotate(2)"><rect x="-20" y="-30" width="40" height="60" rx="5"/><path d="M-10 -15h20M-10 -3h20M-10 9h12"/></g><g transform="translate(1988 983) rotate(-30)"><path d="M-30 30h60M-22 25v-25M-10 25v-40M2 25v-30M14 25v-45M-25 -10l12-14 12 8 14-18 14 6"/><circle cx="-13" cy="-24" r="4"/><circle cx="13" cy="-24" r="4"/></g><g transform="translate(2128 988) rotate(14)"><circle cx="-6" cy="-6" r="22"/><path d="M10 10l22 22M-6 -20v14l10 6"/></g><g transform="translate(2229 993) rotate(15)"><rect x="-20" y="-30" width="40" height="60" rx="5"/><path d="M-10 -15h20M-10 -3h20M-10 9h12"/></g><g transform="translate(9 1116) rotate(5)"><rect x="-20" y="-30" width="40" height="60" rx="5"/><path d="M-10 -15h20M-10 -3h20M-10 9h12"/></g><g transform="translate(130 1105) rotate(26)"><circle cx="-6" cy="-6" r="22"/><path d="M10 10l22 22M-6 -20v14l10 6"/></g><g transform="translate(256 1122) rotate(-30)"><path d="M-30 30h60M-22 25v-25M-10 25v-40M2 25v-30M14 25v-45M-25 -10l12-14 12 8 14-18 14 6"/><circle cx="-13" cy="-24" r="4"/><circle cx="13" cy="-24" r="4"/></g><g transform="translate(384 1101) rotate(24)"><rect x="-20" y="-30" width="40" height="60" rx="5"/><path d="M-10 -15h20M-10 -3h20M-10 9h12"/></g><g transform="translate(492 1105) rotate(-21)"><path d="M-30 30l15-40 15 20 15-30 15 50"/><path d="M-30 30h60"/></g><g transform="translate(609 1117) rotate(23)"><circle cx="-6" cy="-6" r="22"/><path d="M10 10l22 22M-6 -20v14l10 6"/></g><g transform="translate(731 1104) rotate(10)"><circle cx="0" cy="0" r="30"/><path d="M-18 0a18 18 0 0 1 18-18M0 -40a40 40 0 0 1 40 40"/></g><g transform="translate(864 1102) rotate(11)"><circle cx="0" cy="0" r="30"/><path d="M-18 0a18 18 0 0 1 18-18M0 -40a40 40 0 0 1 40 40"/></g><g transform="translate(982 1102) rotate(18)"><rect x="-20" y="-30" width="40" height="60" rx="5"/><path d="M-10 -15h20M-10 -3h20M-10 9h12"/></g><g transform="translate(1102 1117) rotate(18)"><rect x="-30" y="-22" width="60" height="44" rx="6"/><path d="M-30 -10h60M-22 -16h4M-14 -16h4M-6 -16h4"/></g><g transform="translate(1219 1122) rotate(32)"><rect x="-20" y="-30" width="40" height="60" rx="5"/><path d="M-10 -15h20M-10 -3h20M-10 9h12"/></g><g transform="translate(1332 1107) rotate(-19)"><rect x="-20" y="-30" width="40" height="60" rx="5"/><path d="M-10 -15h20M-10 -3h20M-10 9h12"/></g><g transform="translate(1455 1113) rotate(29)"><circle cx="0" cy="0" r="30"/><path d="M-18 0a18 18 0 0 1 18-18M0 -40a40 40 0 0 1 40 40"/></g><g transform="translate(1577 1114) rotate(10)"><path d="M-30 30l15-40 15 20 15-30 15 50"/><path d="M-30 30h60"/></g><g transform="translate(1696 1106) rotate(-11)"><path d="M-30 30l15-40 15 20 15-30 15 50"/><path d="M-30 30h60"/></g><g transform="translate(1828 1106) rotate(-11)"><path d="M-30 30h60M-22 25v-25M-10 25v-40M2 25v-30M14 25v-45M-25 -10l12-14 12 8 14-18 14 6"/><circle cx="-13" cy="-24" r="4"/><circle cx="13" cy="-24" r="4"/></g><g transform="translate(1935 1114) rotate(-10)"><rect x="-20" y="-30" width="40" height="60" rx="5"/><path d="M-10 -15h20M-10 -3h20M-10 9h12"/></g><g transform="translate(2069 1099) rotate(-28)"><rect x="-20" y="-30" width="40" height="60" rx="5"/><path d="M-10 -15h20M-10 -3h20M-10 9h12"/></g><g transform="translate(2168 1106) rotate(19)"><rect x="-30" y="-22" width="60" height="44" rx="6"/><path d="M-30 -10h60M-22 -16h4M-14 -16h4M-6 -16h4"/></g><g transform="translate(2288 1117) rotate(-22)"><circle cx="0" cy="0" r="30"/><path d="M-18 0a18 18 0 0 1 18-18M0 -40a40 40 0 0 1 40 40"/></g><g transform="translate(-45 1230) rotate(-26)"><rect x="-30" y="-22" width="60" height="44" rx="6"/><path d="M-30 -10h60M-22 -16h4M-14 -16h4M-6 -16h4"/></g><g transform="translate(92 1215) rotate(-15)"><rect x="-20" y="-30" width="40" height="60" rx="5"/><path d="M-10 -15h20M-10 -3h20M-10 9h12"/></g><g transform="translate(205 1220) rotate(12)"><rect x="-20" y="-30" width="40" height="60" rx="5"/><path d="M-10 -15h20M-10 -3h20M-10 9h12"/></g><g transform="translate(323 1228) rotate(-9)"><rect x="-30" y="-22" width="60" height="44" rx="6"/><path d="M-30 -10h60M-22 -16h4M-14 -16h4M-6 -16h4"/></g><g transform="translate(438 1223) rotate(-18)"><circle cx="-6" cy="-6" r="22"/><path d="M10 10l22 22M-6 -20v14l10 6"/></g><g transform="translate(550 1216) rotate(-8)"><circle cx="-6" cy="-6" r="22"/><path d="M10 10l22 22M-6 -20v14l10 6"/></g><g transform="translate(682 1226) rotate(-2)"><rect x="-20" y="-30" width="40" height="60" rx="5"/><path d="M-10 -15h20M-10 -3h20M-10 9h12"/></g><g transform="translate(800 1217) rotate(-16)"><rect x="-30" y="-22" width="60" height="44" rx="6"/><path d="M-30 -10h60M-22 -16h4M-14 -16h4M-6 -16h4"/></g><g transform="translate(928 1232) rotate(2)"><rect x="-30" y="-22" width="60" height="44" rx="6"/><path d="M-30 -10h60M-22 -16h4M-14 -16h4M-6 -16h4"/></g><g transform="translate(1045 1237) rotate(-12)"><rect x="-20" y="-30" width="40" height="60" rx="5"/><path d="M-10 -15h20M-10 -3h20M-10 9h12"/></g><g transform="translate(1161 1233) rotate(-23)"><rect x="-30" y="-22" width="60" height="44" rx="6"/><path d="M-30 -10h60M-22 -16h4M-14 -16h4M-6 -16h4"/></g><g transform="translate(1282 1223) rotate(34)"><circle cx="0" cy="0" r="30"/><path d="M-18 0a18 18 0 0 1 18-18M0 -40a40 40 0 0 1 40 40"/></g><g transform="translate(1390 1226) rotate(27)"><path d="M-30 30l15-40 15 20 15-30 15 50"/><path d="M-30 30h60"/></g><g transform="translate(1529 1227) rotate(-34)"><rect x="-30" y="-22" width="60" height="44" rx="6"/><path d="M-30 -10h60M-22 -16h4M-14 -16h4M-6 -16h4"/></g><g transform="translate(1630 1222) rotate(-25)"><path d="M-30 30h60M-22 25v-25M-10 25v-40M2 25v-30M14 25v-45M-25 -10l12-14 12 8 14-18 14 6"/><circle cx="-13" cy="-24" r="4"/><circle cx="13" cy="-24" r="4"/></g><g transform="translate(1770 1222) rotate(6)"><circle cx="-6" cy="-6" r="22"/><path d="M10 10l22 22M-6 -20v14l10 6"/></g><g transform="translate(1877 1217) rotate(10)"><path d="M-30 30h60M-22 25v-25M-10 25v-40M2 25v-30M14 25v-45M-25 -10l12-14 12 8 14-18 14 6"/><circle cx="-13" cy="-24" r="4"/><circle cx="13" cy="-24" r="4"/></g><g transform="translate(2009 1236) rotate(11)"><rect x="-30" y="-22" width="60" height="44" rx="6"/><path d="M-30 -10h60M-22 -16h4M-14 -16h4M-6 -16h4"/></g><g transform="translate(2111 1223) rotate(21)"><rect x="-20" y="-30" width="40" height="60" rx="5"/><path d="M-10 -15h20M-10 -3h20M-10 9h12"/></g><g transform="translate(2246 1232) rotate(0)"><rect x="-20" y="-30" width="40" height="60" rx="5"/><path d="M-10 -15h20M-10 -3h20M-10 9h12"/></g><g transform="translate(22 1344) rotate(23)"><rect x="-30" y="-22" width="60" height="44" rx="6"/><path d="M-30 -10h60M-22 -16h4M-14 -16h4M-6 -16h4"/></g><g transform="translate(138 1335) rotate(31)"><circle cx="-6" cy="-6" r="22"/><path d="M10 10l22 22M-6 -20v14l10 6"/></g><g transform="translate(255 1330) rotate(11)"><rect x="-30" y="-22" width="60" height="44" rx="6"/><path d="M-30 -10h60M-22 -16h4M-14 -16h4M-6 -16h4"/></g><g transform="translate(368 1339) rotate(15)"><rect x="-20" y="-30" width="40" height="60" rx="5"/><path d="M-10 -15h20M-10 -3h20M-10 9h12"/></g><g transform="translate(506 1340) rotate(12)"><path d="M-30 30h60M-22 25v-25M-10 25v-40M2 25v-30M14 25v-45M-25 -10l12-14 12 8 14-18 14 6"/><circle cx="-13" cy="-24" r="4"/><circle cx="13" cy="-24" r="4"/></g><g transform="translate(620 1345) rotate(-13)"><path d="M-30 30h60M-22 25v-25M-10 25v-40M2 25v-30M14 25v-45M-25 -10l12-14 12 8 14-18 14 6"/><circle cx="-13" cy="-24" r="4"/><circle cx="13" cy="-24" r="4"/></g><g transform="translate(733 1330) rotate(1)"><circle cx="-6" cy="-6" r="22"/><path d="M10 10l22 22M-6 -20v14l10 6"/></g><g transform="translate(848 1335) rotate(-28)"><path d="M-30 30l15-40 15 20 15-30 15 50"/><path d="M-30 30h60"/></g><g transform="translate(985 1333) rotate(2)"><path d="M-30 30l15-40 15 20 15-30 15 50"/><path d="M-30 30h60"/></g><g transform="translate(1088 1348) rotate(-27)"><circle cx="-6" cy="-6" r="22"/><path d="M10 10l22 22M-6 -20v14l10 6"/></g><g transform="translate(1226 1345) rotate(34)"><rect x="-30" y="-22" width="60" height="44" rx="6"/><path d="M-30 -10h60M-22 -16h4M-14 -16h4M-6 -16h4"/></g><g transform="translate(1330 1338) rotate(0)"><circle cx="0" cy="0" r="30"/><path d="M-18 0a18 18 0 0 1 18-18M0 -40a40 40 0 0 1 40 40"/></g><g transform="translate(1471 1331) rotate(-25)"><rect x="-30" y="-22" width="60" height="44" rx="6"/><path d="M-30 -10h60M-22 -16h4M-14 -16h4M-6 -16h4"/></g><g transform="translate(1568 1348) rotate(-17)"><rect x="-20" y="-30" width="40" height="60" rx="5"/><path d="M-10 -15h20M-10 -3h20M-10 9h12"/></g><g transform="translate(1691 1351) rotate(19)"><rect x="-20" y="-30" width="40" height="60" rx="5"/><path d="M-10 -15h20M-10 -3h20M-10 9h12"/></g><g transform="translate(1815 1350) rotate(27)"><path d="M-30 30h60M-22 25v-25M-10 25v-40M2 25v-30M14 25v-45M-25 -10l12-14 12 8 14-18 14 6"/><circle cx="-13" cy="-24" r="4"/><circle cx="13" cy="-24" r="4"/></g><g transform="translate(1952 1344) rotate(23)"><rect x="-30" y="-22" width="60" height="44" rx="6"/><path d="M-30 -10h60M-22 -16h4M-14 -16h4M-6 -16h4"/></g><g transform="translate(2060 1339) rotate(7)"><rect x="-30" y="-22" width="60" height="44" rx="6"/><path d="M-30 -10h60M-22 -16h4M-14 -16h4M-6 -16h4"/></g><g transform="translate(2189 1332) rotate(27)"><circle cx="-6" cy="-6" r="22"/><path d="M10 10l22 22M-6 -20v14l10 6"/></g><g transform="translate(2305 1351) rotate(-30)"><circle cx="0" cy="0" r="30"/><path d="M-18 0a18 18 0 0 1 18-18M0 -40a40 40 0 0 1 40 40"/></g><g transform="translate(-39 1467) rotate(9)"><rect x="-20" y="-30" width="40" height="60" rx="5"/><path d="M-10 -15h20M-10 -3h20M-10 9h12"/></g><g transform="translate(68 1455) rotate(24)"><circle cx="0" cy="0" r="30"/><path d="M-18 0a18 18 0 0 1 18-18M0 -40a40 40 0 0 1 40 40"/></g><g transform="translate(205 1463) rotate(32)"><circle cx="0" cy="0" r="30"/><path d="M-18 0a18 18 0 0 1 18-18M0 -40a40 40 0 0 1 40 40"/></g><g transform="translate(319 1465) rotate(-21)"><circle cx="0" cy="0" r="30"/><path d="M-18 0a18 18 0 0 1 18-18M0 -40a40 40 0 0 1 40 40"/></g><g transform="translate(441 1456) rotate(-4)"><path d="M-30 30h60M-22 25v-25M-10 25v-40M2 25v-30M14 25v-45M-25 -10l12-14 12 8 14-18 14 6"/><circle cx="-13" cy="-24" r="4"/><circle cx="13" cy="-24" r="4"/></g><g transform="translate(571 1448) rotate(13)"><rect x="-20" y="-30" width="40" height="60" rx="5"/><path d="M-10 -15h20M-10 -3h20M-10 9h12"/></g><g transform="translate(689 1448) rotate(-9)"><rect x="-30" y="-22" width="60" height="44" rx="6"/><path d="M-30 -10h60M-22 -16h4M-14 -16h4M-6 -16h4"/></g><g transform="translate(800 1456) rotate(2)"><path d="M-30 30l15-40 15 20 15-30 15 50"/><path d="M-30 30h60"/></g><g transform="translate(916 1444) rotate(4)"><circle cx="-6" cy="-6" r="22"/><path d="M10 10l22 22M-6 -20v14l10 6"/></g><g transform="translate(1051 1446) rotate(-16)"><rect x="-30" y="-22" width="60" height="44" rx="6"/><path d="M-30 -10h60M-22 -16h4M-14 -16h4M-6 -16h4"/></g><g transform="translate(1172 1448) rotate(23)"><circle cx="0" cy="0" r="30"/><path d="M-18 0a18 18 0 0 1 18-18M0 -40a40 40 0 0 1 40 40"/></g><g transform="translate(1268 1461) rotate(-31)"><circle cx="-6" cy="-6" r="22"/><path d="M10 10l22 22M-6 -20v14l10 6"/></g><g transform="translate(1398 1446) rotate(-12)"><path d="M-30 30h60M-22 25v-25M-10 25v-40M2 25v-30M14 25v-45M-25 -10l12-14 12 8 14-18 14 6"/><circle cx="-13" cy="-24" r="4"/><circle cx="13" cy="-24" r="4"/></g><g transform="translate(1519 1449) rotate(-5)"><path d="M-30 30l15-40 15 20 15-30 15 50"/><path d="M-30 30h60"/></g><g transform="translate(1647 1465) rotate(30)"><circle cx="-6" cy="-6" r="22"/><path d="M10 10l22 22M-6 -20v14l10 6"/></g><g transform="translate(1755 1457) rotate(0)"><path d="M-30 30h60M-22 25v-25M-10 25v-40M2 25v-30M14 25v-45M-25 -10l12-14 12 8 14-18 14 6"/><circle cx="-13" cy="-24" r="4"/><circle cx="13" cy="-24" r="4"/></g><g transform="translate(1880 1448) rotate(35)"><rect x="-30" y="-22" width="60" height="44" rx="6"/><path d="M-30 -10h60M-22 -16h4M-14 -16h4M-6 -16h4"/></g><g transform="translate(2005 1458) rotate(27)"><rect x="-30" y="-22" width="60" height="44" rx="6"/><path d="M-30 -10h60M-22 -16h4M-14 -16h4M-6 -16h4"/></g><g transform="translate(2120 1453) rotate(35)"><rect x="-20" y="-30" width="40" height="60" rx="5"/><path d="M-10 -15h20M-10 -3h20M-10 9h12"/></g><g transform="translate(2252 1445) rotate(-7)"><circle cx="-6" cy="-6" r="22"/><path d="M10 10l22 22M-6 -20v14l10 6"/></g><g transform="translate(20 1559) rotate(-18)"><path d="M-30 30h60M-22 25v-25M-10 25v-40M2 25v-30M14 25v-45M-25 -10l12-14 12 8 14-18 14 6"/><circle cx="-13" cy="-24" r="4"/><circle cx="13" cy="-24" r="4"/></g><g transform="translate(140 1574) rotate(0)"><path d="M-30 30l15-40 15 20 15-30 15 50"/><path d="M-30 30h60"/></g><g transform="translate(249 1579) rotate(-34)"><path d="M-30 30h60M-22 25v-25M-10 25v-40M2 25v-30M14 25v-45M-25 -10l12-14 12 8 14-18 14 6"/><circle cx="-13" cy="-24" r="4"/><circle cx="13" cy="-24" r="4"/></g><g transform="translate(383 1569) rotate(-4)"><circle cx="-6" cy="-6" r="22"/><path d="M10 10l22 22M-6 -20v14l10 6"/></g><g transform="translate(510 1571) rotate(-15)"><path d="M-30 30l15-40 15 20 15-30 15 50"/><path d="M-30 30h60"/></g><g transform="translate(621 1563) rotate(-17)"><rect x="-30" y="-22" width="60" height="44" rx="6"/><path d="M-30 -10h60M-22 -16h4M-14 -16h4M-6 -16h4"/></g><g transform="translate(736 1574) rotate(-1)"><path d="M-30 30h60M-22 25v-25M-10 25v-40M2 25v-30M14 25v-45M-25 -10l12-14 12 8 14-18 14 6"/><circle cx="-13" cy="-24" r="4"/><circle cx="13" cy="-24" r="4"/></g><g transform="translate(864 1575) rotate(-16)"><circle cx="0" cy="0" r="30"/><path d="M-18 0a18 18 0 0 1 18-18M0 -40a40 40 0 0 1 40 40"/></g><g transform="translate(986 1582) rotate(-35)"><path d="M-30 30h60M-22 25v-25M-10 25v-40M2 25v-30M14 25v-45M-25 -10l12-14 12 8 14-18 14 6"/><circle cx="-13" cy="-24" r="4"/><circle cx="13" cy="-24" r="4"/></g><g transform="translate(1094 1562) rotate(-25)"><path d="M-30 30h60M-22 25v-25M-10 25v-40M2 25v-30M14 25v-45M-25 -10l12-14 12 8 14-18 14 6"/><circle cx="-13" cy="-24" r="4"/><circle cx="13" cy="-24" r="4"/></g><g transform="translate(1219 1566) rotate(32)"><path d="M-30 30l15-40 15 20 15-30 15 50"/><path d="M-30 30h60"/></g><g transform="translate(1331 1573) rotate(24)"><rect x="-20" y="-30" width="40" height="60" rx="5"/><path d="M-10 -15h20M-10 -3h20M-10 9h12"/></g><g transform="translate(1450 1581) rotate(34)"><path d="M-30 30l15-40 15 20 15-30 15 50"/><path d="M-30 30h60"/></g><g transform="translate(1584 1567) rotate(-11)"><circle cx="0" cy="0" r="30"/><path d="M-18 0a18 18 0 0 1 18-18M0 -40a40 40 0 0 1 40 40"/></g><g transform="translate(1701 1564) rotate(-24)"><rect x="-20" y="-30" width="40" height="60" rx="5"/><path d="M-10 -15h20M-10 -3h20M-10 9h12"/></g><g transform="translate(1822 1564) rotate(34)"><circle cx="0" cy="0" r="30"/><path d="M-18 0a18 18 0 0 1 18-18M0 -40a40 40 0 0 1 40 40"/></g><g transform="translate(1941 1574) rotate(-15)"><circle cx="-6" cy="-6" r="22"/><path d="M10 10l22 22M-6 -20v14l10 6"/></g><g transform="translate(2057 1568) rotate(16)"><rect x="-30" y="-22" width="60" height="44" rx="6"/><path d="M-30 -10h60M-22 -16h4M-14 -16h4M-6 -16h4"/></g><g transform="translate(2170 1575) rotate(24)"><rect x="-30" y="-22" width="60" height="44" rx="6"/><path d="M-30 -10h60M-22 -16h4M-14 -16h4M-6 -16h4"/></g><g transform="translate(2309 1580) rotate(11)"><circle cx="0" cy="0" r="30"/><path d="M-18 0a18 18 0 0 1 18-18M0 -40a40 40 0 0 1 40 40"/></g><g transform="translate(-50 1694) rotate(-22)"><path d="M-30 30h60M-22 25v-25M-10 25v-40M2 25v-30M14 25v-45M-25 -10l12-14 12 8 14-18 14 6"/><circle cx="-13" cy="-24" r="4"/><circle cx="13" cy="-24" r="4"/></g><g transform="translate(89 1685) rotate(24)"><rect x="-20" y="-30" width="40" height="60" rx="5"/><path d="M-10 -15h20M-10 -3h20M-10 9h12"/></g><g transform="translate(211 1676) rotate(21)"><rect x="-20" y="-30" width="40" height="60" rx="5"/><path d="M-10 -15h20M-10 -3h20M-10 9h12"/></g><g transform="translate(308 1685) rotate(25)"><rect x="-20" y="-30" width="40" height="60" rx="5"/><path d="M-10 -15h20M-10 -3h20M-10 9h12"/></g><g transform="translate(435 1682) rotate(-21)"><path d="M-30 30l15-40 15 20 15-30 15 50"/><path d="M-30 30h60"/></g><g transform="translate(562 1697) rotate(-9)"><circle cx="0" cy="0" r="30"/><path d="M-18 0a18 18 0 0 1 18-18M0 -40a40 40 0 0 1 40 40"/></g><g transform="translate(687 1677) rotate(13)"><rect x="-30" y="-22" width="60" height="44" rx="6"/><path d="M-30 -10h60M-22 -16h4M-14 -16h4M-6 -16h4"/></g><g transform="translate(805 1696) rotate(8)"><rect x="-30" y="-22" width="60" height="44" rx="6"/><path d="M-30 -10h60M-22 -16h4M-14 -16h4M-6 -16h4"/></g><g transform="translate(932 1685) rotate(-24)"><path d="M-30 30l15-40 15 20 15-30 15 50"/><path d="M-30 30h60"/></g><g transform="translate(1036 1679) rotate(13)"><path d="M-30 30h60M-22 25v-25M-10 25v-40M2 25v-30M14 25v-45M-25 -10l12-14 12 8 14-18 14 6"/><circle cx="-13" cy="-24" r="4"/><circle cx="13" cy="-24" r="4"/></g><g transform="translate(1171 1676) rotate(4)"><rect x="-30" y="-22" width="60" height="44" rx="6"/><path d="M-30 -10h60M-22 -16h4M-14 -16h4M-6 -16h4"/></g><g transform="translate(1276 1691) rotate(7)"><circle cx="-6" cy="-6" r="22"/><path d="M10 10l22 22M-6 -20v14l10 6"/></g><g transform="translate(1402 1685) rotate(-22)"><circle cx="0" cy="0" r="30"/><path d="M-18 0a18 18 0 0 1 18-18M0 -40a40 40 0 0 1 40 40"/></g><g transform="translate(1512 1692) rotate(-19)"><circle cx="0" cy="0" r="30"/><path d="M-18 0a18 18 0 0 1 18-18M0 -40a40 40 0 0 1 40 40"/></g><g transform="translate(1649 1693) rotate(-13)"><rect x="-20" y="-30" width="40" height="60" rx="5"/><path d="M-10 -15h20M-10 -3h20M-10 9h12"/></g><g transform="translate(1753 1679) rotate(-31)"><circle cx="-6" cy="-6" r="22"/><path d="M10 10l22 22M-6 -20v14l10 6"/></g><g transform="translate(1882 1691) rotate(-24)"><rect x="-20" y="-30" width="40" height="60" rx="5"/><path d="M-10 -15h20M-10 -3h20M-10 9h12"/></g><g transform="translate(1991 1680) rotate(-15)"><circle cx="0" cy="0" r="30"/><path d="M-18 0a18 18 0 0 1 18-18M0 -40a40 40 0 0 1 40 40"/></g><g transform="translate(2111 1686) rotate(-26)"><circle cx="-6" cy="-6" r="22"/><path d="M10 10l22 22M-6 -20v14l10 6"/></g><g transform="translate(2238 1686) rotate(-18)"><path d="M-30 30l15-40 15 20 15-30 15 50"/><path d="M-30 30h60"/></g></svg>
<div class="r" style="left:27px;top:19px;width:2094px;height:1535px;border-radius:13px;background:rgba(40,40,100,0.55);box-shadow:0 14px 44px rgba(25,25,100,0.5)"></div>
<div class="r" style="left:28px;top:20px;width:2092px;height:1533px;border-radius:12px;background:#f3f8fe;overflow:hidden" id="win">
<div class="r" style="left:-28px;top:-20px;width:2163px;height:1592px">
<div class="r" style="left:0px;top:0px;width:2163px;height:93px;background:#dae8fd;border-radius:0px;"></div>
<div class="r" style="left:56px;top:33px;width:330px;height:54px;background:#ffffff;border-radius:14px;"></div>
<div class="r" style="left:0px;top:93px;width:2163px;height:90px;background:#ffffff;border-radius:0px;"></div>
<div class="r" style="left:0px;top:183px;width:2163px;height:1px;background:#dde8f4;border-radius:0px;"></div>
<div class="r" style="left:0px;top:272.5px;width:2163px;height:1.2px;background:#dde8f4;border-radius:0px;"></div>
<div class="r" style="left:0px;top:403.6px;width:2163px;height:1.2px;background:#dde8f4;border-radius:0px;"></div>
<svg class="r" style="left:69px;top:49px" width="22" height="22" viewBox="0 0 22 22" fill="none"><g transform="scale(0.6875)">
<path d="M8 2h16a6 6 0 0 1 6 6v12.5a10 10 0 0 0-14 10.5H8a6 6 0 0 1-6-6V8a6 6 0 0 1 6-6z" fill="#6d9cbb"/>
<circle cx="8.5" cy="9" r="2" fill="#fff"/><circle cx="8.5" cy="15" r="2" fill="#fff"/><circle cx="8.5" cy="21" r="2" fill="#fff"/>
<rect x="13" y="7.5" width="11" height="3" rx="1.5" fill="#fff"/><rect x="13" y="13.5" width="11" height="3" rx="1.5" fill="#fff"/>
<path d="M13 26c2-3.2 5-5 9-5s7 1.8 9 5c-2 3.2-5 5-9 5s-7-1.8-9-5z" fill="#4690f7" stroke="#f3f8fe" stroke-width="2.2" paint-order="stroke"/>
<circle cx="22" cy="26" r="2.4" fill="#fff"/></g></svg>
<div class="t" style="left:104.0px;top:52.1px;font-size:17.8px;color:#0d0d0d;font-weight:400;font-style:normal;">Visão Geral da Atividade</div>
<svg class="r" style="left:351px;top:52px" width="16" height="16" viewBox="0 0 16 16" fill="none"><path d="M1.5 1.5l13 13M14.5 1.5l-13 13" stroke="#6d9cbb" stroke-width="1.6"/></svg>
<svg class="r" style="left:408px;top:49px" width="26" height="26" viewBox="0 0 26 26" fill="none"><path d="M13 1.5v23M1.5 13h23" stroke="#6d9cbb" stroke-width="2.2"/></svg>
<div class="r" style="left:1950px;top:55px;width:14px;height:1.2px;background:#6d9cbb;border-radius:0px;"></div>
<svg class="r" style="left:2015px;top:47px" width="17" height="17" viewBox="0 0 17 17" fill="none"><rect x="1.25" y="1.25" width="14.5" height="14.5" stroke="#6d9cbb" stroke-width="1.5"/></svg>
<svg class="r" style="left:2081px;top:47px" width="17" height="17" viewBox="0 0 17 17" fill="none"><path d="M1 1l15 15M16 1L1 16" stroke="#6d9cbb" stroke-width="1.3"/></svg>
<svg class="r" style="left:77px;top:128px" width="20" height="19" viewBox="0 0 20 19" fill="none"><path d="M19 9.5H3M9.5 2.5L2.5 9.5l7 7" stroke="#6d9cbb" stroke-width="2.2" stroke-linecap="round" stroke-linejoin="round"/></svg>
<svg class="r" style="left:134px;top:128px" width="20" height="19" viewBox="0 0 20 19" fill="none"><path d="M1 9.5h16M10.5 2.5l7 7-7 7" stroke="#a8c5d9" stroke-width="2.2" stroke-linecap="round" stroke-linejoin="round"/></svg>
<svg class="r" style="left:220px;top:125px" width="29" height="27" viewBox="0 0 29 27" fill="none"><path d="M14.5 4.5C12 2 9 1.6 6 1.5 3.4 1.5 2 3.5 2 6v14c0 2.5 1.6 3.8 4 4.2 3 .4 6 .8 8.5 2 2.5-1.2 5.5-1.6 8.5-2 2.4-.4 4-1.7 4-4.2V6c0-2.5-1.4-4.5-4-4.5-3 .1-6 .5-8.5 3zM14.5 4.5V26" stroke="#6d9cbb" stroke-width="2.1" stroke-linejoin="round"/></svg>
<div class="t" style="left:263.0px;top:128.9px;font-size:19.65px;color:#0d0d0d;font-weight:400;font-style:normal;-webkit-text-stroke:0.3px #0d0d0d">Acompanhamento</div>
<svg class="r" style="left:438px;top:134px" width="16" height="10" viewBox="0 0 16 10" fill="none"><path d="M1.5 1.5L8 8l6.5-6.5" stroke="#6d9cbb" stroke-width="2" stroke-linecap="round" stroke-linejoin="round"/></svg>
<svg class="r" style="left:494px;top:124px" width="29" height="29" viewBox="0 0 29 29" fill="none"><circle cx="14.3" cy="14.2" r="12.2" stroke="#13993c" stroke-width="2.1"/><path d="M18.3 10.6c-.6-1.4-2.2-2.4-4-2.4-2.4 0-4 1.3-4 3.1 0 4.3 8 2.3 8 6.3 0 1.9-1.7 3.2-4 3.2-2 0-3.6-1-4.1-2.6M14.3 6.3v2M14.3 20.2v2" stroke="#13993c" stroke-width="2.1" stroke-linecap="round"/></svg>
<div class="t" style="left:537.0px;top:129.2px;font-size:19.3px;color:#0d0d0d;font-weight:400;font-style:normal;-webkit-text-stroke:0.3px #0d0d0d">Vendas</div>
<svg class="r" style="left:616px;top:134px" width="16" height="10" viewBox="0 0 16 10" fill="none"><path d="M1.5 1.5L8 8l6.5-6.5" stroke="#6d9cbb" stroke-width="2" stroke-linecap="round" stroke-linejoin="round"/></svg>
<svg class="r" style="left:674px;top:124px" width="25" height="29" viewBox="0 0 25 29" fill="none"><circle cx="12.5" cy="7.5" r="5.5" stroke="#8f6cf6" stroke-width="2.1"/><path d="M3 26.5c0-5.5 4.2-9 9.5-9s9.5 3.5 9.5 9" stroke="#8f6cf6" stroke-width="2.1" stroke-linecap="round"/></svg>
<div class="t" style="left:715.0px;top:129.1px;font-size:19.4px;color:#0d0d0d;font-weight:400;font-style:normal;-webkit-text-stroke:0.3px #0d0d0d">Clientes</div>
<svg class="r" style="left:800px;top:134px" width="16" height="10" viewBox="0 0 16 10" fill="none"><path d="M1.5 1.5L8 8l6.5-6.5" stroke="#6d9cbb" stroke-width="2" stroke-linecap="round" stroke-linejoin="round"/></svg>
<div class="r" style="left:729px;top:160.5px;width:30px;height:4.5px;background:#8b6cf5;border-radius:3px;"></div>
<svg class="r" style="left:856px;top:124px" width="29" height="29" viewBox="0 0 29 29" fill="none"><rect x="8.5" y="2" width="12" height="11" rx="2.5" stroke="#4690f7" stroke-width="2"/><rect x="2" y="13" width="12.5" height="13.5" rx="2.5" stroke="#4690f7" stroke-width="2"/><rect x="14.5" y="13" width="12.5" height="13.5" rx="2.5" stroke="#4690f7" stroke-width="2"/><path d="M13 6.5h3M6.8 18h3M19.3 18h3" stroke="#4690f7" stroke-width="2" stroke-linecap="round"/></svg>
<div class="t" style="left:899.0px;top:129.1px;font-size:19.4px;color:#0d0d0d;font-weight:400;font-style:normal;-webkit-text-stroke:0.3px #0d0d0d">Produtos</div>
<svg class="r" style="left:992px;top:134px" width="16" height="10" viewBox="0 0 16 10" fill="none"><path d="M1.5 1.5L8 8l6.5-6.5" stroke="#6d9cbb" stroke-width="2" stroke-linecap="round" stroke-linejoin="round"/></svg>
<svg class="r" style="left:1048px;top:124px" width="29" height="29" viewBox="0 0 29 29" fill="none"><rect x="2" y="8" width="25" height="19" rx="3.5" stroke="#f2a20a" stroke-width="2.1"/><path d="M9.5 8V5.5c0-1.6 1-2.5 2.5-2.5h5c1.5 0 2.5.9 2.5 2.5V8M2 15.5h25M14.5 14v3" stroke="#f2a20a" stroke-width="2.1" stroke-linecap="round"/></svg>
<div class="t" style="left:1092.0px;top:129.3px;font-size:19.15px;color:#0d0d0d;font-weight:400;font-style:normal;-webkit-text-stroke:0.3px #0d0d0d">Representantes</div>
<svg class="r" style="left:1242px;top:134px" width="16" height="10" viewBox="0 0 16 10" fill="none"><path d="M1.5 1.5L8 8l6.5-6.5" stroke="#6d9cbb" stroke-width="2" stroke-linecap="round" stroke-linejoin="round"/></svg>
<svg class="r" style="left:1299px;top:124px" width="26" height="28" viewBox="0 0 26 28" fill="none"><path d="M13 26.5c-1.2 0-10-8.5-10-15.2C3 5.8 7.5 1.5 13 1.5s10 4.3 10 9.8c0 6.7-8.8 15.2-10 15.2z" stroke="#f55a5a" stroke-width="2.1" stroke-linejoin="round"/><circle cx="13" cy="11" r="3.4" stroke="#f55a5a" stroke-width="2.1"/></svg>
<div class="t" style="left:1341.5px;top:129.1px;font-size:19.4px;color:#0d0d0d;font-weight:400;font-style:normal;-webkit-text-stroke:0.3px #0d0d0d">Geomarketing</div>
<svg class="r" style="left:1478px;top:134px" width="16" height="10" viewBox="0 0 16 10" fill="none"><path d="M1.5 1.5L8 8l6.5-6.5" stroke="#6d9cbb" stroke-width="2" stroke-linecap="round" stroke-linejoin="round"/></svg>
<svg class="r" style="left:2040px;top:119px" width="38" height="38" viewBox="0 0 38 38" fill="none"><path d="M15.61 7.81 L16.46 4.52 A2.7 2.7 0 0 1 21.54 4.52 L22.39 7.81 L26.91 10.42 L30.18 9.52 A2.7 2.7 0 0 1 32.72 13.91 L30.30 16.29 L30.30 21.51 L32.72 23.89 A2.7 2.7 0 0 1 30.18 28.28 L26.91 27.38 L22.39 29.99 L21.54 33.28 A2.7 2.7 0 0 1 16.46 33.28 L15.61 29.99 L11.09 27.38 L7.82 28.28 A2.7 2.7 0 0 1 5.28 23.89 L7.70 21.51 L7.70 16.29 L5.28 13.91 A2.7 2.7 0 0 1 7.82 9.52 L11.09 10.42 Z" stroke="#6d9cbb" stroke-width="2.9" stroke-linejoin="round"/><circle cx="19" cy="18.9" r="4.6" stroke="#6d9cbb" stroke-width="2.8"/></svg>
<div class="r" style="left:58px;top:201px;width:216px;height:49px;background:#4690f7;border-radius:25px;"></div>
<svg class="r" style="left:78px;top:213px" width="23" height="25" viewBox="0 0 23 25" fill="none"><path d="M2.5 2.5h18l-7 9v8.5l-4 2.8V11.5z" stroke="#fff" stroke-width="2.2" stroke-linejoin="round"/></svg>
<div class="t" style="left:115.0px;top:217.1px;font-size:18.1px;color:#ffffff;font-weight:400;font-style:normal;-webkit-text-stroke:0.35px #fff">Adicionar filtro...</div>
<div class="r" style="left:1629px;top:200px;width:458px;height:54px;border:2px solid #d8e6f5;border-radius:30px;background:#fff"></div>
<svg class="r" style="left:1656px;top:216px" width="27" height="27" viewBox="0 0 27 27" fill="none"><rect x="2.5" y="4.5" width="22" height="20" rx="3.5" stroke="#6d9cbb" stroke-width="2"/><path d="M2.5 10.5h22M8.5 2v4M18.5 2v4" stroke="#6d9cbb" stroke-width="2" stroke-linecap="round"/><circle cx="9" cy="17" r="1.2" fill="#6d9cbb"/><circle cx="13.5" cy="17" r="1.2" fill="#6d9cbb"/><circle cx="18" cy="17" r="1.2" fill="#6d9cbb"/></svg>
<div class="t" style="left:1694.0px;top:220.5px;font-size:17.8px;color:#0d0d0d;font-weight:400;font-style:normal;-webkit-text-stroke:0.5px #0d0d0d">Todo o período</div>
<div class="t" style="left:1827.0px;top:220.7px;font-size:17.6px;color:#5f7d8f;font-weight:400;font-style:normal;">18 abr 2024 a 9 abr 2026</div>
<svg class="r" style="left:2042px;top:225px" width="16" height="10" viewBox="0 0 16 10" fill="none"><path d="M1 1h14L8 9z" fill="#6d9cbb"/></svg>
<svg class="r" style="left:63px;top:319px" width="34" height="34" viewBox="0 0 34 34" fill="none"><g transform="scale(1.0625)">
<path d="M8 2h16a6 6 0 0 1 6 6v12.5a10 10 0 0 0-14 10.5H8a6 6 0 0 1-6-6V8a6 6 0 0 1 6-6z" fill="#6d9cbb"/>
<circle cx="8.5" cy="9" r="2" fill="#fff"/><circle cx="8.5" cy="15" r="2" fill="#fff"/><circle cx="8.5" cy="21" r="2" fill="#fff"/>
<rect x="13" y="7.5" width="11" height="3" rx="1.5" fill="#fff"/><rect x="13" y="13.5" width="11" height="3" rx="1.5" fill="#fff"/>
<path d="M13 26c2-3.2 5-5 9-5s7 1.8 9 5c-2 3.2-5 5-9 5s-7-1.8-9-5z" fill="#4690f7" stroke="#f3f8fe" stroke-width="2.2" paint-order="stroke"/>
<circle cx="22" cy="26" r="2.4" fill="#fff"/></g></svg>
<div class="t" style="left:122.0px;top:314.0px;font-size:22.5px;color:#0d0d0d;font-weight:400;font-style:normal;-webkit-text-stroke:0.75px #0d0d0d">Visão geral da atividade</div>
<div class="t" style="left:122.0px;top:341.8px;font-size:17.9px;color:#5f7d8f;font-weight:400;font-style:normal;">Clientes categorizados pela atividade de compra</div>
<div class="r" style="left:666px;top:297px;width:730px;height:60px;background:#dae8fd;border-radius:30px;"></div>
<div class="r" style="left:860px;top:303px;width:82px;height:48px;background:#4690f7;border-radius:24px;"></div>
<div class="t" style="left:696.6px;top:319.2px;font-size:17.9px;color:#6f7884;font-weight:400;font-style:normal;">Dia</div>
<div class="t" style="left:770.5px;top:319.2px;font-size:17.9px;color:#0d0d0d;font-weight:400;font-style:normal;">Semana</div>
<div class="t" style="left:883.8px;top:319.2px;font-size:17.9px;color:#fff;font-weight:400;font-style:normal;">Mês</div>
<div class="t" style="left:966.0px;top:319.2px;font-size:17.9px;color:#0d0d0d;font-weight:400;font-style:normal;">Bimestre</div>
<div class="t" style="left:1086.0px;top:319.2px;font-size:17.9px;color:#0d0d0d;font-weight:400;font-style:normal;">Trimestre</div>
<div class="t" style="left:1210.0px;top:319.2px;font-size:17.9px;color:#0d0d0d;font-weight:400;font-style:normal;">Semestre</div>
<div class="t" style="left:1334.0px;top:319.2px;font-size:17.9px;color:#0d0d0d;font-weight:400;font-style:normal;">Ano</div>
<div class="t" style="left:988.7px;top:363.6px;font-size:16.2px;color:#5f7d8f;font-weight:400;font-style:normal;">Por período</div>
<svg class="r" style="left:1986px;top:319px" width="34" height="13" viewBox="0 0 34 13" fill="none"><circle cx="5.5" cy="6.5" r="3.3" stroke="#6d9cbb" stroke-width="2"/><circle cx="17" cy="6.5" r="3.3" stroke="#6d9cbb" stroke-width="2"/><circle cx="28.5" cy="6.5" r="3.3" stroke="#6d9cbb" stroke-width="2"/></svg>
<div class="t" style="left:1930.0px;top:355.1px;font-size:16.4px;color:#5f7d8f;font-weight:400;font-style:normal;">Configurar atividade</div>
<div class="r" style="left:2101px;top:406px;width:17px;height:586px;background:#d3e2f0;border-radius:9px;"></div>
<div class="t" style="left:50px;top:437.1px;font-size:28.2px;color:#0d0d0d">Carteira em <span style="font-size:29.9px;-webkit-text-stroke:0.8px #0d0d0d">09/04/2026</span></div>
<div class="r" style="left:50px;top:500px;width:312px;height:103px;background:#fff;border-radius:24px;"></div>
<div class="r" style="left:374px;top:500px;width:312px;height:103px;background:#fff;border-radius:24px;"></div>
<div class="r" style="left:50px;top:615px;width:312px;height:104px;background:#fff;border-radius:24px;"></div>
<div class="r" style="left:374px;top:615px;width:312px;height:104px;background:#fff;border-radius:24px;"></div>
<div class="r" style="left:74px;top:534px;width:37px;height:36px;background:#dff2fa;border-radius:6px;"></div>
<svg class="r" style="left:74px;top:534px" width="37" height="36" viewBox="0 0 37 36" fill="none"><circle cx="19" cy="11.5" r="4.6" stroke="#0aa4db" stroke-width="3"/><path d="M7.7 30V24.5c0-2.8 1.7-4.5 4.5-4.5h13.6c2.8 0 4.5 1.7 4.5 4.5V30z" stroke="#0aa4db" stroke-width="3" stroke-linejoin="round"/></svg>
<div class="r" style="left:398px;top:534px;width:37px;height:36px;background:#ddf6fa;border-radius:6px;"></div>
<svg class="r" style="left:398px;top:534px" width="37" height="36" viewBox="0 0 37 36" fill="none"><circle cx="18" cy="11.5" r="4.6" stroke="#0ec3d9" stroke-width="3"/><path d="M6.7 30V24.5c0-2.8 1.7-4.5 4.5-4.5h13.6c2.8 0 4.5 1.7 4.5 4.5V30z" stroke="#0ec3d9" stroke-width="3" stroke-linejoin="round"/><circle cx="28" cy="29" r="6" fill="#ddf6fa"/><path d="M23.5 28.5l3.5 3.5 6-7" stroke="#0ec3d9" stroke-width="3" stroke-linecap="round"/></svg>
<div class="r" style="left:74px;top:649px;width:37px;height:36px;background:#e7f6de;border-radius:6px;"></div>
<svg class="r" style="left:74px;top:649px" width="37" height="36" viewBox="0 0 37 36" fill="none"><circle cx="18.5" cy="18.3" r="13.6" stroke="#58c300" stroke-width="2.2"/><path d="M18.5 18.3V6.8A11.5 11.5 0 1 1 7.5 21.6z" fill="#58c300"/></svg>
<div class="r" style="left:398px;top:649px;width:37px;height:36px;background:#dff8df;border-radius:6px;"></div>
<svg class="r" style="left:398px;top:649px" width="37" height="36" viewBox="0 0 37 36" fill="none"><circle cx="18" cy="12.5" r="4.6" stroke="#13d11e" stroke-width="3"/><path d="M6.7 31V25.5c0-2.8 1.7-4.5 4.5-4.5h9v10z" stroke="#13d11e" stroke-width="3" stroke-linejoin="round"/><circle cx="27.5" cy="28" r="6.8" fill="#13d11e"/><path d="M25.5 25.5c.5 2.5 2 4.2 4 5" stroke="#dff8df" stroke-width="1.5" stroke-linecap="round"/></svg>
<div class="t" style="left:129.0px;top:526.4px;font-size:18.1px;color:#5f7d8f;font-weight:400;font-style:normal;">Clientes com compras</div>
<div class="t" style="left:453.0px;top:526.4px;font-size:18.1px;color:#5f7d8f;font-weight:400;font-style:normal;">Com compra recente</div>
<div class="t" style="left:129.0px;top:641.1px;font-size:18.1px;color:#5f7d8f;font-weight:400;font-style:normal;">Tempo de vida de cliente</div>
<div class="t" style="left:453.0px;top:641.1px;font-size:18.1px;color:#5f7d8f;font-weight:400;font-style:normal;">LTV de cliente</div>
<div class="t" style="left:129.0px;top:548.4px;font-size:28.8px;color:#0d0d0d;font-weight:700;font-style:normal;">1.477</div>
<div class="t" style="left:453.0px;top:548.4px;font-size:28.8px;color:#0d0d0d;font-weight:700;font-style:normal;">1.183</div>
<div class="t" style="left:129px;top:663.9px;font-size:28.8px;color:#0d0d0d"><b>65</b> dias</div>
<div class="t" style="left:453px;top:664.6px;font-size:28px;color:#0d0d0d">R$ <b>18.582</b>,58</div>
<div class="r" style="left:711px;top:500px;width:1360px;height:441px;background:#fff;border-radius:24px;"></div>
<div class="t" style="left:734.5px;top:526.0px;font-size:22.5px;color:#0d0d0d;font-weight:400;font-style:normal;-webkit-text-stroke:0.45px currentColor;">Atividade da carteira nesse dia</div>
<div class="r" style="left:734px;top:575px;width:227px;height:139px;background:#e0edfd;border-radius:24px;"></div>
<svg class="r" style="left:756px;top:599px" width="28" height="24" viewBox="0 0 28 24" fill="none"><path d="M3.5 13l6.5 6.5L24 5" stroke="#4690f7" stroke-width="4.2" stroke-linecap="round" stroke-linejoin="round"/></svg>
<div class="t" style="left:758.0px;top:637.1px;font-size:29px;color:#0d0d0d;font-weight:400;font-style:normal;-webkit-text-stroke:0.5px #0d0d0d">772</div>
<div class="t" style="left:758px;top:671.9px;font-size:17.8px;color:#4690f7">ativos<span style="display:inline-block;width:5.5px;height:5.5px;border-radius:50%;background:#4690f7;margin:0 13px 0 13px;vertical-align:middle;position:relative;top:-2px"></span>52<span style="display:inline-block;transform:scaleX(0.85);transform-origin:0 50%">%</span></div>
<div class="r" style="left:973px;top:575px;width:227px;height:139px;background:#dcefe2;border-radius:24px;"></div>
<svg class="r" style="left:995px;top:597.5px" width="28" height="28" viewBox="0 0 28 28" fill="none"><path d="M13.5 2v22.5M2 13.3h23" stroke="#13993c" stroke-width="4.4"/></svg>
<div class="t" style="left:997.0px;top:637.1px;font-size:29px;color:#0d0d0d;font-weight:400;font-style:normal;-webkit-text-stroke:0.5px #0d0d0d">49</div>
<div class="t" style="left:997px;top:671.9px;font-size:17.8px;color:#13993c">novos<span style="display:inline-block;width:5.5px;height:5.5px;border-radius:50%;background:#13993c;margin:0 13px 0 13px;vertical-align:middle;position:relative;top:-2px"></span>3<span style="display:inline-block;transform:scaleX(0.85);transform-origin:0 50%">%</span></div>
<div class="r" style="left:1212px;top:575px;width:227px;height:139px;background:#ede8fd;border-radius:24px;"></div>
<svg class="r" style="left:1234px;top:599px" width="28" height="24" viewBox="0 0 28 24" fill="none"><path d="M3 10.5L11.5 3v4.8c6.5 0 11.5 3.6 12.5 11.2-2.6-3.6-6-5-12.5-5V19z" fill="#8f6cf6" stroke="#8f6cf6" stroke-width="1.5" stroke-linejoin="round"/></svg>
<div class="t" style="left:1236.0px;top:637.1px;font-size:29px;color:#0d0d0d;font-weight:400;font-style:normal;-webkit-text-stroke:0.5px #0d0d0d">5</div>
<div class="t" style="left:1236px;top:671.9px;font-size:17.8px;color:#8f6cf6">recuperados<span style="display:inline-block;width:5.5px;height:5.5px;border-radius:50%;background:#8f6cf6;margin:0 13px 0 13px;vertical-align:middle;position:relative;top:-2px"></span>0<span style="display:inline-block;transform:scaleX(0.85);transform-origin:0 50%">%</span></div>
<div class="r" style="left:734px;top:727px;width:227px;height:139px;background:#fef1d8;border-radius:24px;"></div>
<svg class="r" style="left:760px;top:750px" width="20" height="30" viewBox="0 0 20 30" fill="none"><path d="M6.8 3.8a3.2 3.2 0 0 1 6.4 0L12.1 16.2a2.1 2.1 0 0 1-4.2 0z" fill="#f2a20a"/><circle cx="10" cy="22.4" r="2.8" fill="#f2a20a"/></svg>
<div class="t" style="left:758.0px;top:789.1px;font-size:29px;color:#0d0d0d;font-weight:400;font-style:normal;-webkit-text-stroke:0.5px #0d0d0d">357</div>
<div class="t" style="left:758px;top:823.9px;font-size:17.8px;color:#f2a20a">quase inativos<span style="display:inline-block;width:5.5px;height:5.5px;border-radius:50%;background:#f2a20a;margin:0 13px 0 13px;vertical-align:middle;position:relative;top:-2px"></span>24<span style="display:inline-block;transform:scaleX(0.85);transform-origin:0 50%">%</span></div>
<div class="r" style="left:973px;top:727px;width:227px;height:139px;background:#fedcdc;border-radius:24px;"></div>
<svg class="r" style="left:997px;top:750px" width="28" height="28" viewBox="0 0 28 28" fill="none"><path d="M4.5 4.5l17.5 17.5M22 4.5L4.5 22" stroke="#f55353" stroke-width="4.6" stroke-linecap="round"/></svg>
<div class="t" style="left:997.0px;top:789.1px;font-size:29px;color:#0d0d0d;font-weight:400;font-style:normal;-webkit-text-stroke:0.5px #0d0d0d">294</div>
<div class="t" style="left:997px;top:823.9px;font-size:17.8px;color:#f55353">inativos<span style="display:inline-block;width:5.5px;height:5.5px;border-radius:50%;background:#f55353;margin:0 13px 0 13px;vertical-align:middle;position:relative;top:-2px"></span>20<span style="display:inline-block;transform:scaleX(0.85);transform-origin:0 50%">%</span></div>
<div class="r" style="left:1463.5px;top:575px;width:581px;height:339px;border:1.5px solid #d8e6f5;border-radius:26px;background:#fff"></div>
<div class="r" style="left:1681px;top:600px;width:270px;height:36px;background:#dcdcdc;border-radius:18.0px;"></div>
<div class="r" style="left:1681px;top:600px;width:270px;height:36px;border-radius:18.0px;overflow:hidden"><div style="position:absolute;left:0.0px;top:0;width:141.0px;height:36px;background:#4690f7"></div><div style="position:absolute;left:141.0px;top:0;width:8.7px;height:36px;background:#13993c"></div><div style="position:absolute;left:149.7px;top:0;width:2.9px;height:36px;background:#8f6cf6"></div><div style="position:absolute;left:152.6px;top:0;width:65.4px;height:36px;background:#f2a20a"></div></div>
<div class="t" style="left:1489.0px;top:608.8px;font-size:18px;color:#0d0d0d;font-weight:400;font-style:normal;-webkit-text-stroke:0.4px #0d0d0d;">Com compra recente</div>
<div class="t" style="left:1025.0px;width:1000px;text-align:right;top:608.8px;font-size:18px;color:#0d0d0d;font-weight:400;font-style:normal;-webkit-text-stroke:0.4px #0d0d0d;">80,1<span style="display:inline-block;transform:scaleX(0.82);transform-origin:0 50%">%</span></div>
<div class="r" style="left:1681px;top:662px;width:270px;height:17.5px;background:#dcdcdc;border-radius:8.75px;"></div>
<div class="r" style="left:1681px;top:662px;width:270px;height:17.5px;border-radius:8.75px;overflow:hidden"><div style="position:absolute;left:0.0px;top:0;width:141.0px;height:17.5px;background:#4690f7"></div></div>
<div class="t" style="left:1501.0px;top:662.3px;font-size:18px;color:#0d0d0d;font-weight:400;font-style:normal;">Ativos</div>
<div class="t" style="left:1025.0px;width:1000px;text-align:right;top:662.3px;font-size:18px;color:#0d0d0d;font-weight:400;font-style:normal;">52,3<span style="display:inline-block;transform:scaleX(0.82);transform-origin:0 50%">%</span></div>
<div class="r" style="left:1681px;top:707.7px;width:270px;height:17.5px;background:#dcdcdc;border-radius:8.75px;"></div>
<div class="r" style="left:1681px;top:707.7px;width:270px;height:17.5px;border-radius:8.75px;overflow:hidden"><div style="position:absolute;left:0.0px;top:0;width:9.0px;height:17.5px;background:#13993c"></div></div>
<div class="t" style="left:1501.0px;top:708.2px;font-size:18px;color:#0d0d0d;font-weight:400;font-style:normal;">Novos</div>
<div class="t" style="left:1025.0px;width:1000px;text-align:right;top:708.2px;font-size:18px;color:#0d0d0d;font-weight:400;font-style:normal;">3,3<span style="display:inline-block;transform:scaleX(0.82);transform-origin:0 50%">%</span></div>
<div class="r" style="left:1681px;top:753px;width:270px;height:17.5px;background:#dcdcdc;border-radius:8.75px;"></div>
<div class="r" style="left:1681px;top:753px;width:270px;height:17.5px;border-radius:8.75px;overflow:hidden"><div style="position:absolute;left:0.0px;top:0;width:2.5px;height:17.5px;background:#8f6cf6"></div></div>
<div class="t" style="left:1501.0px;top:753.5px;font-size:18px;color:#0d0d0d;font-weight:400;font-style:normal;">Recuperados</div>
<div class="t" style="left:1025.0px;width:1000px;text-align:right;top:753.5px;font-size:18px;color:#0d0d0d;font-weight:400;font-style:normal;">0,3<span style="display:inline-block;transform:scaleX(0.82);transform-origin:0 50%">%</span></div>
<div class="r" style="left:1681px;top:799px;width:270px;height:17.5px;background:#dcdcdc;border-radius:8.75px;"></div>
<div class="r" style="left:1681px;top:799px;width:270px;height:17.5px;border-radius:8.75px;overflow:hidden"><div style="position:absolute;left:0.0px;top:0;width:65.0px;height:17.5px;background:#f2a20a"></div></div>
<div class="t" style="left:1501.0px;top:799.4px;font-size:18px;color:#0d0d0d;font-weight:400;font-style:normal;">Quase inativos</div>
<div class="t" style="left:1025.0px;width:1000px;text-align:right;top:799.4px;font-size:18px;color:#0d0d0d;font-weight:400;font-style:normal;">24,2<span style="display:inline-block;transform:scaleX(0.82);transform-origin:0 50%">%</span></div>
<div class="r" style="left:1489px;top:836px;width:534px;height:1.5px;background:#d8e6f5;border-radius:0px;"></div>
<div class="r" style="left:1681px;top:856.5px;width:270px;height:35.5px;background:#dcdcdc;border-radius:17.75px;"></div>
<div class="r" style="left:1681px;top:856.5px;width:270px;height:35.5px;border-radius:17.75px;overflow:hidden"><div style="position:absolute;left:0.0px;top:0;width:54.0px;height:35.5px;background:#fd5353"></div></div>
<div class="t" style="left:1489.0px;top:865.1px;font-size:18px;color:#0d0d0d;font-weight:400;font-style:normal;-webkit-text-stroke:0.4px #0d0d0d;">Inativos</div>
<div class="t" style="left:1025.0px;width:1000px;text-align:right;top:865.1px;font-size:18px;color:#0d0d0d;font-weight:400;font-style:normal;-webkit-text-stroke:0.4px #0d0d0d;">19,9<span style="display:inline-block;transform:scaleX(0.82);transform-origin:0 50%">%</span></div>
<div class="t" style="left:50px;top:999.1px;font-size:28.6px;color:#0d0d0d">Movimentação da carteira de <span style="font-size:28.1px;-webkit-text-stroke:0.8px #0d0d0d">18 abr 2024 a 9 abr 2026</span></div>
<div class="r" style="left:50px;top:1060px;width:2021px;height:700px;background:#fff;border-radius:24px;"></div>
<div class="t" style="left:74.5px;top:1087.2px;font-size:22.2px;color:#0d0d0d;font-weight:400;font-style:normal;-webkit-text-stroke:0.45px currentColor;">Saldo no período</div>
<div class="t" style="left:74.5px;top:1118.6px;font-size:18.2px;color:#0d0d0d;font-weight:400;font-style:italic;">18/04/2024 <span style="color:#6d9cbb;font-style:normal">→</span> 09/04/2026</div>
<div class="r" style="left:74px;top:1163px;width:554px;height:222px;background:#e0edfd;border-radius:26px;"></div>
<svg class="r" style="left:338px;top:1209.5px" width="26" height="26" viewBox="0 0 26 26" fill="none"><path d="M2.8 24.5L22.5 4.2" stroke="#13993c" stroke-width="3.6" stroke-linecap="round"/><path d="M4.5 2.7h19.4v19" stroke="#13993c" stroke-width="3.6" stroke-linecap="butt" stroke-linejoin="miter"/></svg>
<div class="t" style="left:-149.0px;width:1000px;text-align:center;top:1250.2px;font-size:28.9px;color:#0d0d0d;font-weight:400;font-style:normal;-webkit-text-stroke:0.6px #0d0d0d">+1.183 clientes</div>
<div class="t" style="left:-149.0px;width:1000px;text-align:center;top:1283.8px;font-size:18px;color:#4690f7;font-weight:400;font-style:normal;">clientes em atividade</div>
<div class="t" style="left:-149.0px;width:1000px;text-align:center;top:1318.4px;font-size:17.3px;color:#4690f7;font-weight:400;font-style:italic;">+ 47,3 por mês</div>
<div class="r" style="left:74px;top:1397px;width:168px;height:138px;background:#dcefe2;border-radius:24px;"></div>
<div class="r" style="left:255px;top:1397px;width:195px;height:138px;background:#ede8fd;border-radius:24px;"></div>
<div class="r" style="left:463px;top:1397px;width:165px;height:138px;background:#fedcdc;border-radius:24px;"></div>
<svg class="r" style="left:97.2px;top:1432.7px" width="26" height="26" viewBox="0 0 26 26" fill="none"><path d="M2.8 24.5L22.5 4.2" stroke="#13993c" stroke-width="3.6" stroke-linecap="round"/><path d="M4.5 2.7h19.4v19" stroke="#13993c" stroke-width="3.6" stroke-linecap="butt" stroke-linejoin="miter"/></svg>
<div class="r" style="left:279px;top:1433.5px;width:23px;height:4.5px;background:#5f7d8f;border-radius:2px;"></div>
<svg class="r" style="left:485.5px;top:1432.7px" width="26" height="26" viewBox="0 0 26 26" fill="none"><path d="M2.8 2.7L22.5 23" stroke="#f55353" stroke-width="3.6" stroke-linecap="round"/><path d="M23.9 5.5v19H4.5" stroke="#f55353" stroke-width="3.6" stroke-linecap="butt" stroke-linejoin="miter"/></svg>
<div class="t" style="left:146.5px;top:1423.3px;font-size:29px;color:#0d0d0d;font-weight:400;font-style:normal;-webkit-text-stroke:0.5px #0d0d0d">1.477</div>
<div class="t" style="left:146.5px;top:1457.8px;font-size:18px;color:#13993c;font-weight:400;font-style:normal;">abertos</div>
<div class="t" style="left:97.5px;top:1491.9px;font-size:17.3px;color:#13993c;font-weight:400;font-style:italic;">+ 59,1 por mês</div>
<div class="t" style="left:327.5px;top:1423.3px;font-size:29px;color:#0d0d0d;font-weight:400;font-style:normal;-webkit-text-stroke:0.5px #0d0d0d">0</div>
<div class="t" style="left:327.5px;top:1457.8px;font-size:18px;color:#8f6cf6;font-weight:400;font-style:normal;">recuperados</div>
<div class="t" style="left:278.5px;top:1491.9px;font-size:17.3px;color:#8f6cf6;font-weight:400;font-style:italic;">+ 0,0 por mês</div>
<div class="t" style="left:535.0px;top:1423.3px;font-size:29px;color:#0d0d0d;font-weight:400;font-style:normal;-webkit-text-stroke:0.5px #0d0d0d">294</div>
<div class="t" style="left:535.0px;top:1457.8px;font-size:18px;color:#f55353;font-weight:400;font-style:normal;">perdidos</div>
<div class="t" style="left:486.0px;top:1491.9px;font-size:17.3px;color:#f55353;font-weight:400;font-style:italic;">- 11,8 por mês</div>
<div class="r" style="left:676.5px;top:1084px;width:1.5px;height:500px;background:#e3edf8;border-radius:0px;"></div>
<div class="t" style="left:726.0px;top:1086.7px;font-size:22.8px;color:#0d0d0d;font-weight:400;font-style:normal;-webkit-text-stroke:0.45px currentColor;">Histórico de movimentação</div>
<div class="r" style="left:1143px;top:1117px;width:487px;height:60px;background:#dae8fd;border-radius:30px;"></div>
<div class="r" style="left:1149px;top:1123px;width:93px;height:48px;background:#4690f7;border-radius:24px;"></div>
<div class="t" style="left:1172.8px;top:1139.1px;font-size:17.6px;color:#fff;font-weight:400;font-style:normal;">Saldo</div>
<div class="t" style="left:1266.0px;top:1139.1px;font-size:17.6px;color:#0d0d0d;font-weight:400;font-style:normal;">Abertos</div>
<div class="t" style="left:1377.6px;top:1139.1px;font-size:17.6px;color:#0d0d0d;font-weight:400;font-style:normal;">Recuperados</div>
<div class="t" style="left:1530.6px;top:1139.1px;font-size:17.6px;color:#0d0d0d;font-weight:400;font-style:normal;">Perdidos</div>
<div class="r" style="left:780px;top:1195.6px;width:1192px;height:2px;background:#e6eff9;border-radius:0px;"></div>
<div class="r" style="left:780px;top:1214.8px;width:1192px;height:2px;background:#e6eff9;border-radius:0px;"></div>
<div class="r" style="left:780px;top:1233.9px;width:1192px;height:2px;background:#e6eff9;border-radius:0px;"></div>
<div class="r" style="left:780px;top:1253.1px;width:1192px;height:2px;background:#e6eff9;border-radius:0px;"></div>
<div class="r" style="left:780px;top:1272.3px;width:1192px;height:2px;background:#e6eff9;border-radius:0px;"></div>
<div class="r" style="left:780px;top:1291.4px;width:1192px;height:2px;background:#e6eff9;border-radius:0px;"></div>
<div class="r" style="left:780px;top:1310.6px;width:1192px;height:2px;background:#e6eff9;border-radius:0px;"></div>
<div class="r" style="left:780px;top:1329.8px;width:1192px;height:2px;background:#e6eff9;border-radius:0px;"></div>
<div class="r" style="left:780px;top:1349.0px;width:1192px;height:2px;background:#e6eff9;border-radius:0px;"></div>
<div class="r" style="left:780px;top:1368.1px;width:1192px;height:2px;background:#e6eff9;border-radius:0px;"></div>
<div class="r" style="left:780px;top:1387.3px;width:1192px;height:2px;background:#e6eff9;border-radius:0px;"></div>
<div class="r" style="left:780px;top:1406.5px;width:1192px;height:2px;background:#e6eff9;border-radius:0px;"></div>
<div class="r" style="left:780px;top:1425.6px;width:1192px;height:2px;background:#e6eff9;border-radius:0px;"></div>
<div class="r" style="left:780px;top:1444.8px;width:1192px;height:2px;background:#e6eff9;border-radius:0px;"></div>
<div class="r" style="left:780px;top:1464.0px;width:1192px;height:2px;background:#e6eff9;border-radius:0px;"></div>
<div class="r" style="left:780px;top:1483.1px;width:1192px;height:2px;background:#e6eff9;border-radius:0px;"></div>
<div class="r" style="left:780px;top:1502.3px;width:1192px;height:2px;background:#e6eff9;border-radius:0px;"></div>
<div class="r" style="left:780px;top:1521.5px;width:1192px;height:2px;background:#e6eff9;border-radius:0px;"></div>
<div class="r" style="left:780px;top:1540.7px;width:1192px;height:2px;background:#e6eff9;border-radius:0px;"></div>
<div class="r" style="left:802.7px;top:1189px;width:2px;height:400px;background:#e6eff9;border-radius:0px;"></div>
<div class="r" style="left:1041px;top:1189px;width:2px;height:400px;background:#e6eff9;border-radius:0px;"></div>
<div class="r" style="left:1279.5px;top:1189px;width:2px;height:400px;background:#e6eff9;border-radius:0px;"></div>
<div class="r" style="left:1518px;top:1189px;width:2px;height:400px;background:#e6eff9;border-radius:0px;"></div>
<div class="r" style="left:1756.3px;top:1189px;width:2px;height:400px;background:#e6eff9;border-radius:0px;"></div>
<svg class="r" style="left:770px;top:1180px" width="1220" height="380"><rect x="11.30" y="193.40" width="44.5" height="149.10" rx="5" fill="#13993c"/><rect x="59.00" y="32.00" width="44.5" height="310.50" rx="5" fill="#13993c"/><rect x="106.70" y="51.30" width="44.5" height="291.20" rx="5" fill="#13993c"/><rect x="154.40" y="28.30" width="44.5" height="314.20" rx="5" fill="#13993c"/><rect x="202.10" y="58.80" width="44.5" height="283.70" rx="5" fill="#13993c"/><rect x="249.80" y="135.70" width="44.5" height="206.80" rx="5" fill="#13993c"/><rect x="297.50" y="62.90" width="44.5" height="279.60" rx="5" fill="#13993c"/><rect x="345.20" y="101.00" width="44.5" height="241.50" rx="5" fill="#13993c"/><rect x="392.90" y="43.50" width="44.5" height="299.00" rx="5" fill="#13993c"/><rect x="440.60" y="51.20" width="44.5" height="291.30" rx="5" fill="#13993c"/><rect x="488.30" y="116.50" width="44.5" height="226.00" rx="5" fill="#13993c"/><rect x="536.00" y="82.00" width="44.5" height="260.50" rx="5" fill="#13993c"/><rect x="583.70" y="105.20" width="44.5" height="237.30" rx="5" fill="#13993c"/><rect x="631.40" y="109.00" width="44.5" height="233.50" rx="5" fill="#13993c"/><rect x="679.10" y="128.00" width="44.5" height="214.50" rx="5" fill="#13993c"/><rect x="726.80" y="151.00" width="44.5" height="191.50" rx="5" fill="#13993c"/><rect x="774.50" y="109.00" width="44.5" height="233.50" rx="5" fill="#13993c"/><rect x="822.20" y="158.30" width="44.5" height="184.20" rx="5" fill="#13993c"/><rect x="869.90" y="266.00" width="44.5" height="76.50" rx="5" fill="#13993c"/><rect x="917.60" y="308.40" width="44.5" height="34.10" rx="5" fill="#13993c"/><rect x="965.30" y="342.50" width="44.5" height="11.2" rx="5" fill="#fd5454"/><rect x="1013.00" y="342.50" width="44.5" height="7.8" rx="3.9" fill="#fd5454"/><rect x="1060.70" y="342.50" width="44.5" height="7.8" rx="3.9" fill="#fd5454"/><rect x="1108.40" y="342.50" width="44.5" height="7.8" rx="3.9" fill="#fd5454"/><rect x="1156.10" y="334.80" width="44.5" height="7.8" rx="3.9" fill="#13993c"/></svg>
</div></div>
</body></html>
